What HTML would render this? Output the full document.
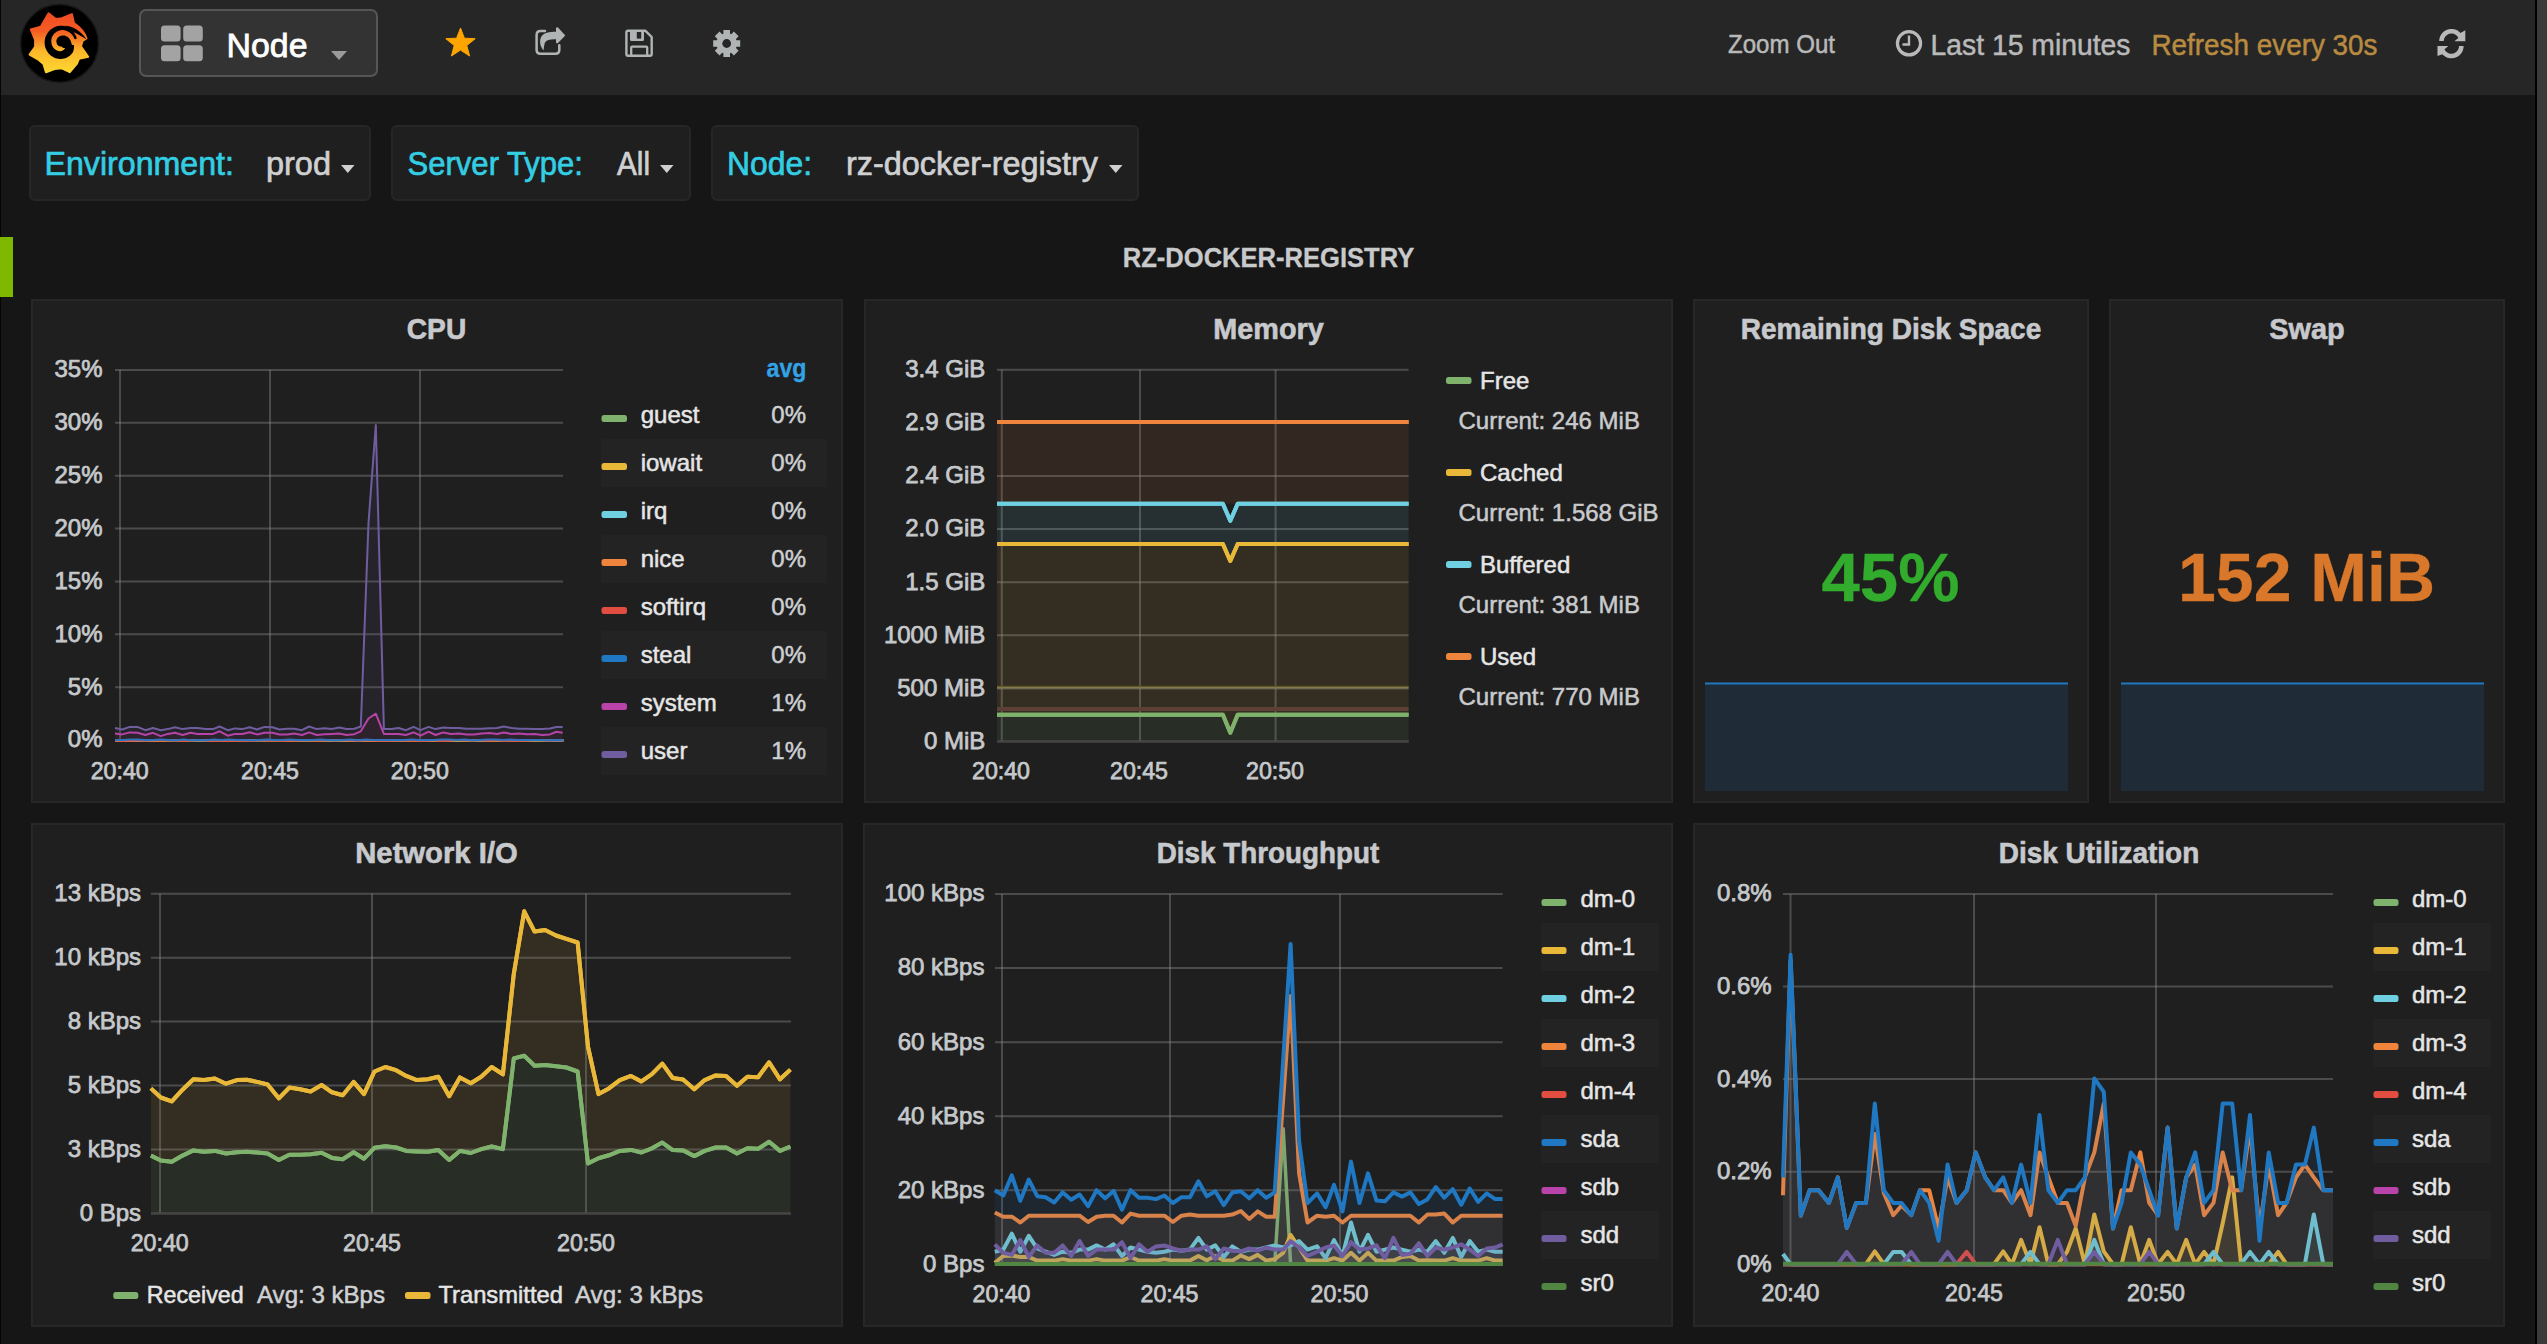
<!DOCTYPE html><html><head><meta charset="utf-8"><title>Grafana - Node</title>
<style>
html,body{margin:0;padding:0;}
body{width:2547px;height:1344px;overflow:hidden;background:#161616;position:relative;font-family:"Liberation Sans", sans-serif;}
.panel{position:absolute;box-sizing:border-box;background:#1f1f1f;border:2px solid #272727;}
.abs{position:absolute;}
.var{position:absolute;box-sizing:border-box;background:#1f1f1f;border:2px solid #262626;border-radius:6px;}
</style></head><body>

<div class="abs" style="left:0;top:0;width:1px;height:1344px;background:#050505"></div>
<div class="abs" style="left:2535px;top:0;width:2px;height:1344px;background:#000"></div>
<div class="abs" style="left:2537px;top:0;width:10px;height:1344px;background:#3a3a3a"></div>
<div class="abs" style="left:1px;top:0;width:2534px;height:95px;background:#262626"></div>
<div class="abs" style="left:139px;top:9px;width:239px;height:68px;box-sizing:border-box;background:#333;border:2px solid #565656;border-radius:7px"></div>
<svg style="position:absolute;left:0px;top:0px" width="2535" height="95" viewBox="0 0 2535 95" font-family='"Liberation Sans", sans-serif'><g transform="translate(15,0) scale(0.066979)"><defs><linearGradient id="lg" gradientUnits="userSpaceOnUse" x1="0" y1="200" x2="0" y2="1090">
<stop offset="0" stop-color="#f04a26"/><stop offset="0.3" stop-color="#f55d22"/><stop offset="0.62" stop-color="#fbb62a"/><stop offset="1" stop-color="#fdd831"/></linearGradient></defs>
<circle cx="665" cy="648" r="580" fill="#000" stroke="#161616" stroke-width="22"/>
<path fill="url(#lg)" stroke="url(#lg)" stroke-width="30" stroke-linejoin="round" d="M500,200 L610,285 L700,272 L850,210 L880,345 C960,400 1040,480 1068,575 L1010,610 L985,690 L1092,848 L955,878 L925,950 L818,1078 L700,1020 L590,1030 L462,1078 L425,955 L355,895 L218,815 L300,700 L300,595 L236,440 L385,400 L430,320 Z"/>
<circle cx="690" cy="640" r="170" fill="#000"/>
<path fill="#000" d="M922,578 L917,558 L910,538 L901,518 L890,500 L878,482 L865,465 L849,450 L833,436 L815,423 L796,412 L776,403 L756,395 L734,389 L712,385 L690,383 L668,384 L646,388 L624,393 L603,400 L582,409 L563,420 L545,432 L527,446 L511,461 L497,478 L484,496 L473,514 L463,534 L455,554 L449,575 L445,597 L442,618 L442,640 L443,662 L446,683 L451,704 L458,724 L467,744 L477,763 L489,781 L502,798 L517,813 L533,827 L550,840 L568,851 L587,861 L607,869 L627,875 L648,879 L669,881 L690,882 L711,879 L731,875 L751,869 L770,861 L789,852 L806,841 L822,828 L837,815 L850,800 L862,785 L870,766 L875,747 L879,728 L881,709 L881,691 L879,673 L690,640 Z"/>
<path fill="#000" d="M740,384 C870,385 990,470 1070,588 C1000,545 930,500 860,470 Z"/>
<path fill="url(#lg)" d="M902,677 L902,660 L900,644 L899,627 L896,611 L893,595 L888,580 L881,565 L874,550 L866,537 L856,524 L846,511 L835,500 L823,490 L810,481 L797,473 L783,466 L768,460 L754,455 L739,451 L724,449 L709,448 L693,448 L678,450 L664,454 L650,459 L636,465 L624,472 L612,480 L601,488 L590,498 L581,508 L573,518 L565,530 L559,541 L553,553 L549,565 L546,577 L544,590 L542,602 L542,614 L543,626 L544,637 L546,649 L548,660 L551,671 L555,681 L560,691 L565,701 L571,710 L578,718 L586,726 L593,733 L602,740 L611,745 L620,750 L629,755 L639,758 L648,761 L658,763 L668,764 L678,764 L688,763 L697,760 L706,757 L715,752 L723,747 L730,741 L736,735 L742,729 L747,722 L744,718 L735,717 L727,715 L719,713 L711,710 L705,706 L699,701 L693,696 L689,692 L685,693 L681,693 L676,693 L672,692 L668,692 L663,690 L659,689 L655,687 L651,684 L647,682 L643,679 L639,675 L636,672 L633,668 L630,664 L628,659 L626,654 L624,649 L623,644 L622,639 L620,633 L619,627 L618,621 L618,615 L618,609 L619,602 L620,596 L623,589 L625,583 L629,576 L632,570 L637,564 L642,559 L648,553 L654,548 L661,544 L668,540 L675,537 L684,534 L692,532 L701,530 L710,529 L719,529 L728,530 L737,531 L747,533 L756,536 L765,540 L774,545 L783,550 L792,556 L799,563 L807,571 L814,580 L820,589 L826,598 L831,609 L835,620 L838,631 L841,643 L845,655 L848,668 Z"/>
</g><rect x="161" y="25.6" width="19.6" height="16" rx="3.5" fill="#a3a3a3"/><rect x="183.2" y="25.6" width="19.6" height="16" rx="3.5" fill="#a3a3a3"/><rect x="161" y="45.2" width="19.6" height="16" rx="3.5" fill="#a3a3a3"/><rect x="183.2" y="45.2" width="19.6" height="16" rx="3.5" fill="#a3a3a3"/><text x="226.5" y="57" font-size="33.5" fill="#ffffff" text-anchor="start" textLength="81" lengthAdjust="spacingAndGlyphs" stroke="#ffffff" stroke-width="0.8">Node</text><path d="M331,51 L347,51 L339,60 Z" fill="#9a9a9a"/><path d="M460.5,28.0 L464.4,38.2 L475.2,38.7 L466.8,45.5 L469.6,56.0 L460.5,50.1 L451.4,56.0 L454.2,45.5 L445.8,38.7 L456.6,38.2 Z" fill="#ffa500" stroke="#ffa500" stroke-width="1" stroke-linejoin="round"/><path d="M545,31 L540.5,31 Q536.6,31 536.6,35 L536.6,50 Q536.6,53.7 540.5,53.7 L555.5,53.7 Q559.3,53.7 559.3,50 L559.3,45.3" fill="none" stroke="#b1b4b4" stroke-width="2.5" stroke-linecap="round"/><path d="M543.5,50.5 C539,45 539,38 543,34.8 C545,32.8 549,31.8 556,31.8 L556,28 Q556.8,26.6 558,27.6 L565.3,35.5 L558,43 Q556.8,44 556,42.6 L556,39.2 C550,39 546.5,40 545,42.5 C544,45 544,48 543.5,50.5 Z" fill="#b1b4b4"/><path d="M628,30.8 L645.5,30.8 L651.7,37 L651.7,54 Q651.7,55.8 650,55.8 L628,55.8 Q626.4,55.8 626.4,54 L626.4,32.5 Q626.4,30.8 628,30.8 Z" fill="none" stroke="#b1b4b4" stroke-width="2.4" stroke-linejoin="round"/><path d="M630,31 L644,31 L644,39.5 Q644,41 642.5,41 L631.5,41 Q630,41 630,39.5 Z" fill="#b1b4b4"/><rect x="636.8" y="32" width="4.4" height="6.6" fill="#262626"/><path d="M631.2,55 L631.2,47.5 Q631.2,46.6 632.2,46.6 L646.3,46.6 Q647.2,46.6 647.2,47.5 L647.2,55" fill="none" stroke="#b1b4b4" stroke-width="2.3"/><path d="M723.4,33.8 L723.4,30.0 L730.0,30.0 L730.0,33.8 L731.2,34.2 L733.9,31.6 L738.6,36.3 L736.0,39.0 L736.4,40.2 L740.2,40.2 L740.2,46.8 L736.4,46.8 L736.0,48.0 L738.6,50.7 L733.9,55.4 L731.2,52.8 L730.0,53.2 L730.0,57.0 L723.4,57.0 L723.4,53.2 L722.2,52.8 L719.5,55.4 L714.8,50.7 L717.4,48.0 L717.0,46.8 L713.2,46.8 L713.2,40.2 L717.0,40.2 L717.4,39.0 L714.8,36.3 L719.5,31.6 L722.2,34.2 Z" fill="#b1b4b4"/><circle cx="726.7" cy="43.5" r="4.4" fill="#262626"/><text x="1728" y="53" font-size="26" fill="#b9b9b9" text-anchor="start" textLength="107" lengthAdjust="spacingAndGlyphs" stroke="#b9b9b9" stroke-width="0.5">Zoom Out</text><circle cx="1909" cy="43.3" r="11.6" fill="none" stroke="#b9b9b9" stroke-width="3.2"/><path d="M1909,35.5 L1909,44.5 L1902.5,44.5" fill="none" stroke="#b9b9b9" stroke-width="2.4"/><text x="1930.5" y="55.3" font-size="29.5" fill="#b9b9b9" text-anchor="start" textLength="200" lengthAdjust="spacingAndGlyphs" stroke="#b9b9b9" stroke-width="0.5">Last 15 minutes</text><text x="2151.5" y="55.3" font-size="29.5" fill="#b88b40" text-anchor="start" textLength="226" lengthAdjust="spacingAndGlyphs" stroke="#b88b40" stroke-width="0.5">Refresh every 30s</text><path d="M2439.20,41.10 L2439.34,39.27 L2439.75,37.48 L2440.42,35.78 L2441.35,34.19 L2442.50,32.76 L2443.85,31.52 L2445.37,30.49 L2447.03,29.71 L2448.79,29.18 L2450.60,28.93 L2452.44,28.94 L2454.25,29.24 L2455.99,29.80 L2457.64,30.62 L2459.14,31.67 L2460.47,32.94 L2465.30,30.30 L2465.30,41.20 L2454.40,41.20 L2458.29,37.89 L2457.65,36.77 L2456.83,35.78 L2455.86,34.95 L2454.76,34.28 L2453.57,33.82 L2452.31,33.55 L2451.03,33.51 L2449.76,33.68 L2448.53,34.06 L2447.39,34.65 L2446.36,35.41 L2445.47,36.34 L2444.76,37.41 L2444.23,38.58 L2443.91,39.82 L2443.80,41.10 Z" fill="#b9b9b9"/><path d="M2463.60,46.10 L2463.46,47.93 L2463.05,49.72 L2462.38,51.42 L2461.45,53.01 L2460.30,54.44 L2458.95,55.68 L2457.43,56.71 L2455.77,57.49 L2454.01,58.02 L2452.20,58.27 L2450.36,58.26 L2448.55,57.96 L2446.81,57.40 L2445.16,56.58 L2443.66,55.53 L2442.33,54.26 L2437.50,56.10 L2437.50,46.00 L2448.40,46.00 L2444.51,49.31 L2445.15,50.43 L2445.97,51.42 L2446.94,52.25 L2448.04,52.92 L2449.23,53.38 L2450.49,53.65 L2451.77,53.69 L2453.04,53.52 L2454.27,53.14 L2455.41,52.55 L2456.44,51.79 L2457.33,50.86 L2458.04,49.79 L2458.57,48.62 L2458.89,47.38 L2459.00,46.10 Z" fill="#b9b9b9"/></svg>
<div class="var" style="left:29px;top:125px;width:342px;height:76px"></div>
<div class="var" style="left:391px;top:125px;width:300px;height:76px"></div>
<div class="var" style="left:711px;top:125px;width:428px;height:76px"></div>
<svg style="position:absolute;left:0px;top:95px" width="1200" height="140" viewBox="0 95 1200 140" font-family='"Liberation Sans", sans-serif'><text x="44.5" y="175" font-size="33.5" fill="#33cee3" text-anchor="start" textLength="189.5" lengthAdjust="spacingAndGlyphs" stroke="#33cee3" stroke-width="0.7">Environment:</text><text x="266" y="175" font-size="33.5" fill="#cfd0d2" text-anchor="start" textLength="65" lengthAdjust="spacingAndGlyphs" stroke="#cfd0d2" stroke-width="0.7">prod</text><path d="M341,165 L354.5,165 L347.75,173 Z" fill="#d0d0d0"/><text x="407.5" y="175" font-size="33.5" fill="#33cee3" text-anchor="start" textLength="175.5" lengthAdjust="spacingAndGlyphs" stroke="#33cee3" stroke-width="0.7">Server Type:</text><text x="617" y="175" font-size="33.5" fill="#cfd0d2" text-anchor="start" textLength="33" lengthAdjust="spacingAndGlyphs" stroke="#cfd0d2" stroke-width="0.7">All</text><path d="M660,165 L673.5,165 L666.75,173 Z" fill="#d0d0d0"/><text x="727" y="175" font-size="33.5" fill="#33cee3" text-anchor="start" textLength="85" lengthAdjust="spacingAndGlyphs" stroke="#33cee3" stroke-width="0.7">Node:</text><text x="846" y="175" font-size="33.5" fill="#cfd0d2" text-anchor="start" textLength="252" lengthAdjust="spacingAndGlyphs" stroke="#cfd0d2" stroke-width="0.7">rz-docker-registry</text><path d="M1109,165 L1122.5,165 L1115.75,173 Z" fill="#d0d0d0"/></svg>
<div class="abs" style="left:0;top:237px;width:13px;height:60px;background:#7eb900"></div>
<svg style="position:absolute;left:1000px;top:230px" width="500" height="60" viewBox="1000 230 500 60" font-family='"Liberation Sans", sans-serif'><text x="1268.5" y="267" font-size="27.5" fill="#c8c9cb" text-anchor="middle" font-weight="bold" textLength="291.5" lengthAdjust="spacingAndGlyphs" stroke="#c8c9cb" stroke-width="0.3">RZ-DOCKER-REGISTRY</text></svg>
<div class="panel" style="left:31px;top:299px;width:812px;height:504px"></div>
<div class="panel" style="left:864px;top:299px;width:809px;height:504px"></div>
<div class="panel" style="left:1693px;top:299px;width:396px;height:504px"></div>
<div class="panel" style="left:2109px;top:299px;width:396px;height:504px"></div>
<div class="panel" style="left:31px;top:823px;width:812px;height:504px"></div>
<div class="panel" style="left:863px;top:823px;width:810px;height:504px"></div>
<div class="panel" style="left:1693px;top:823px;width:812px;height:504px"></div>
<svg style="position:absolute;left:31px;top:299px" width="812" height="504" viewBox="31 299 812 504" font-family='"Liberation Sans", sans-serif'><text x="436.5" y="339" font-size="29.5" fill="#c7c9cc" text-anchor="middle" font-weight="bold" textLength="59.5" lengthAdjust="spacingAndGlyphs" stroke="#c7c9cc" stroke-width="0.6">CPU</text><line x1="115" y1="370.0" x2="563" y2="370.0" stroke="rgba(145,145,145,0.39)" stroke-width="2"/><line x1="115" y1="422.85714285714283" x2="563" y2="422.85714285714283" stroke="rgba(145,145,145,0.39)" stroke-width="2"/><line x1="115" y1="475.7142857142857" x2="563" y2="475.7142857142857" stroke="rgba(145,145,145,0.39)" stroke-width="2"/><line x1="115" y1="528.5714285714286" x2="563" y2="528.5714285714286" stroke="rgba(145,145,145,0.39)" stroke-width="2"/><line x1="115" y1="581.4285714285714" x2="563" y2="581.4285714285714" stroke="rgba(145,145,145,0.39)" stroke-width="2"/><line x1="115" y1="634.2857142857142" x2="563" y2="634.2857142857142" stroke="rgba(145,145,145,0.39)" stroke-width="2"/><line x1="115" y1="687.1428571428571" x2="563" y2="687.1428571428571" stroke="rgba(145,145,145,0.39)" stroke-width="2"/><line x1="115" y1="740.0" x2="563" y2="740.0" stroke="rgba(145,145,145,0.39)" stroke-width="2"/><line x1="120" y1="370" x2="120" y2="740" stroke="rgba(145,145,145,0.39)" stroke-width="2"/><line x1="270" y1="370" x2="270" y2="740" stroke="rgba(145,145,145,0.39)" stroke-width="2"/><line x1="420" y1="370" x2="420" y2="740" stroke="rgba(145,145,145,0.39)" stroke-width="2"/><text x="102.5" y="377.4" font-size="24" fill="#c6c9cc" text-anchor="end" stroke="#c6c9cc" stroke-width="0.75">35%</text><text x="102.5" y="430.2571428571428" font-size="24" fill="#c6c9cc" text-anchor="end" stroke="#c6c9cc" stroke-width="0.75">30%</text><text x="102.5" y="483.1142857142857" font-size="24" fill="#c6c9cc" text-anchor="end" stroke="#c6c9cc" stroke-width="0.75">25%</text><text x="102.5" y="535.9714285714285" font-size="24" fill="#c6c9cc" text-anchor="end" stroke="#c6c9cc" stroke-width="0.75">20%</text><text x="102.5" y="588.8285714285714" font-size="24" fill="#c6c9cc" text-anchor="end" stroke="#c6c9cc" stroke-width="0.75">15%</text><text x="102.5" y="641.6857142857142" font-size="24" fill="#c6c9cc" text-anchor="end" stroke="#c6c9cc" stroke-width="0.75">10%</text><text x="102.5" y="694.5428571428571" font-size="24" fill="#c6c9cc" text-anchor="end" stroke="#c6c9cc" stroke-width="0.75">5%</text><text x="102.5" y="747.4" font-size="24" fill="#c6c9cc" text-anchor="end" stroke="#c6c9cc" stroke-width="0.75">0%</text><text x="119.7" y="778.6" font-size="24" fill="#c6c9cc" text-anchor="middle" textLength="58" lengthAdjust="spacingAndGlyphs" stroke="#c6c9cc" stroke-width="0.75">20:40</text><text x="270" y="778.6" font-size="24" fill="#c6c9cc" text-anchor="middle" textLength="58" lengthAdjust="spacingAndGlyphs" stroke="#c6c9cc" stroke-width="0.75">20:45</text><text x="419.8" y="778.6" font-size="24" fill="#c6c9cc" text-anchor="middle" textLength="58" lengthAdjust="spacingAndGlyphs" stroke="#c6c9cc" stroke-width="0.75">20:50</text><path d="M115.0,740.5 L122.6,740.5 L130.2,740.8 L137.8,740.8 L145.4,740.1 L153.0,740.8 L160.6,740.8 L168.2,740.1 L175.8,740.1 L183.4,740.5 L191.0,740.5 L198.6,740.5 L206.2,740.5 L213.8,740.1 L221.4,740.8 L229.0,740.1 L236.6,740.8 L244.2,740.1 L251.8,740.5 L259.4,740.5 L267.0,740.8 L274.6,740.5 L282.2,740.1 L289.8,740.5 L297.4,740.8 L305.0,740.8 L312.6,740.5 L320.2,740.5 L327.8,740.1 L335.4,740.1 L343.0,740.1 L350.6,740.8 L358.2,740.8 L365.8,740.5 L373.4,740.5 L381.0,740.1 L388.6,740.8 L396.2,740.5 L403.8,740.5 L411.4,740.1 L419.0,740.8 L426.6,740.1 L434.2,740.8 L441.8,740.1 L449.4,740.5 L457.0,740.8 L464.6,740.1 L472.2,740.5 L479.8,740.5 L487.4,740.8 L495.0,740.5 L502.6,740.5 L510.2,740.1 L517.8,740.5 L525.4,740.5 L533.0,740.8 L540.6,740.8 L548.2,740.8 L555.8,740.5 L563.4,740.5 L563.4,740.5 L115.0,740.5 Z" fill="#7EB26D" fill-opacity="0.1" stroke="none"/><path d="M115.0,740.5 L122.6,740.5 L130.2,740.8 L137.8,740.8 L145.4,740.1 L153.0,740.8 L160.6,740.8 L168.2,740.1 L175.8,740.1 L183.4,740.5 L191.0,740.5 L198.6,740.5 L206.2,740.5 L213.8,740.1 L221.4,740.8 L229.0,740.1 L236.6,740.8 L244.2,740.1 L251.8,740.5 L259.4,740.5 L267.0,740.8 L274.6,740.5 L282.2,740.1 L289.8,740.5 L297.4,740.8 L305.0,740.8 L312.6,740.5 L320.2,740.5 L327.8,740.1 L335.4,740.1 L343.0,740.1 L350.6,740.8 L358.2,740.8 L365.8,740.5 L373.4,740.5 L381.0,740.1 L388.6,740.8 L396.2,740.5 L403.8,740.5 L411.4,740.1 L419.0,740.8 L426.6,740.1 L434.2,740.8 L441.8,740.1 L449.4,740.5 L457.0,740.8 L464.6,740.1 L472.2,740.5 L479.8,740.5 L487.4,740.8 L495.0,740.5 L502.6,740.5 L510.2,740.1 L517.8,740.5 L525.4,740.5 L533.0,740.8 L540.6,740.8 L548.2,740.8 L555.8,740.5 L563.4,740.5" fill="none" stroke="#7EB26D" stroke-width="2" stroke-linejoin="round" stroke-linecap="butt"/><path d="M115.0,740.8 L122.6,740.8 L130.2,740.1 L137.8,740.5 L145.4,740.8 L153.0,740.1 L160.6,740.8 L168.2,740.1 L175.8,740.8 L183.4,740.5 L191.0,740.5 L198.6,740.5 L206.2,740.5 L213.8,740.5 L221.4,740.5 L229.0,740.5 L236.6,740.5 L244.2,740.8 L251.8,740.5 L259.4,740.1 L267.0,740.1 L274.6,740.5 L282.2,740.5 L289.8,740.8 L297.4,740.1 L305.0,740.1 L312.6,740.5 L320.2,740.5 L327.8,740.8 L335.4,740.8 L343.0,740.8 L350.6,740.8 L358.2,740.8 L365.8,740.5 L373.4,740.8 L381.0,740.8 L388.6,740.5 L396.2,740.5 L403.8,740.5 L411.4,740.5 L419.0,740.8 L426.6,740.5 L434.2,740.5 L441.8,740.1 L449.4,740.5 L457.0,740.5 L464.6,740.5 L472.2,740.5 L479.8,740.5 L487.4,740.1 L495.0,740.5 L502.6,740.5 L510.2,740.5 L517.8,740.8 L525.4,740.5 L533.0,740.1 L540.6,740.1 L548.2,740.1 L555.8,740.8 L563.4,740.5 L563.4,740.5 L115.0,740.5 Z" fill="#EAB839" fill-opacity="0.1" stroke="none"/><path d="M115.0,740.8 L122.6,740.8 L130.2,740.1 L137.8,740.5 L145.4,740.8 L153.0,740.1 L160.6,740.8 L168.2,740.1 L175.8,740.8 L183.4,740.5 L191.0,740.5 L198.6,740.5 L206.2,740.5 L213.8,740.5 L221.4,740.5 L229.0,740.5 L236.6,740.5 L244.2,740.8 L251.8,740.5 L259.4,740.1 L267.0,740.1 L274.6,740.5 L282.2,740.5 L289.8,740.8 L297.4,740.1 L305.0,740.1 L312.6,740.5 L320.2,740.5 L327.8,740.8 L335.4,740.8 L343.0,740.8 L350.6,740.8 L358.2,740.8 L365.8,740.5 L373.4,740.8 L381.0,740.8 L388.6,740.5 L396.2,740.5 L403.8,740.5 L411.4,740.5 L419.0,740.8 L426.6,740.5 L434.2,740.5 L441.8,740.1 L449.4,740.5 L457.0,740.5 L464.6,740.5 L472.2,740.5 L479.8,740.5 L487.4,740.1 L495.0,740.5 L502.6,740.5 L510.2,740.5 L517.8,740.8 L525.4,740.5 L533.0,740.1 L540.6,740.1 L548.2,740.1 L555.8,740.8 L563.4,740.5" fill="none" stroke="#EAB839" stroke-width="2" stroke-linejoin="round" stroke-linecap="butt"/><path d="M115.0,740.3 L122.6,740.6 L130.2,740.6 L137.8,740.6 L145.4,740.6 L153.0,739.9 L160.6,740.3 L168.2,740.3 L175.8,740.3 L183.4,739.9 L191.0,739.9 L198.6,740.6 L206.2,740.3 L213.8,740.3 L221.4,740.3 L229.0,739.9 L236.6,740.3 L244.2,740.3 L251.8,739.9 L259.4,740.3 L267.0,739.9 L274.6,739.9 L282.2,740.3 L289.8,739.9 L297.4,740.3 L305.0,739.9 L312.6,740.3 L320.2,740.3 L327.8,740.3 L335.4,740.6 L343.0,740.3 L350.6,740.3 L358.2,740.6 L365.8,739.9 L373.4,740.3 L381.0,740.3 L388.6,739.9 L396.2,740.6 L403.8,739.9 L411.4,740.3 L419.0,739.9 L426.6,740.6 L434.2,739.9 L441.8,739.9 L449.4,740.3 L457.0,740.3 L464.6,740.3 L472.2,740.3 L479.8,740.6 L487.4,740.3 L495.0,739.9 L502.6,740.3 L510.2,740.6 L517.8,740.3 L525.4,740.6 L533.0,739.9 L540.6,740.3 L548.2,740.3 L555.8,740.6 L563.4,740.3 L563.4,740.5 L115.0,740.5 Z" fill="#6ED0E0" fill-opacity="0.1" stroke="none"/><path d="M115.0,740.3 L122.6,740.6 L130.2,740.6 L137.8,740.6 L145.4,740.6 L153.0,739.9 L160.6,740.3 L168.2,740.3 L175.8,740.3 L183.4,739.9 L191.0,739.9 L198.6,740.6 L206.2,740.3 L213.8,740.3 L221.4,740.3 L229.0,739.9 L236.6,740.3 L244.2,740.3 L251.8,739.9 L259.4,740.3 L267.0,739.9 L274.6,739.9 L282.2,740.3 L289.8,739.9 L297.4,740.3 L305.0,739.9 L312.6,740.3 L320.2,740.3 L327.8,740.3 L335.4,740.6 L343.0,740.3 L350.6,740.3 L358.2,740.6 L365.8,739.9 L373.4,740.3 L381.0,740.3 L388.6,739.9 L396.2,740.6 L403.8,739.9 L411.4,740.3 L419.0,739.9 L426.6,740.6 L434.2,739.9 L441.8,739.9 L449.4,740.3 L457.0,740.3 L464.6,740.3 L472.2,740.3 L479.8,740.6 L487.4,740.3 L495.0,739.9 L502.6,740.3 L510.2,740.6 L517.8,740.3 L525.4,740.6 L533.0,739.9 L540.6,740.3 L548.2,740.3 L555.8,740.6 L563.4,740.3" fill="none" stroke="#6ED0E0" stroke-width="2" stroke-linejoin="round" stroke-linecap="butt"/><path d="M115.0,740.8 L122.6,740.5 L130.2,740.8 L137.8,740.1 L145.4,740.5 L153.0,740.8 L160.6,740.8 L168.2,740.8 L175.8,740.5 L183.4,740.5 L191.0,740.5 L198.6,740.5 L206.2,740.5 L213.8,740.5 L221.4,740.8 L229.0,740.5 L236.6,740.8 L244.2,740.1 L251.8,740.5 L259.4,740.5 L267.0,740.5 L274.6,740.5 L282.2,740.5 L289.8,740.5 L297.4,740.8 L305.0,740.5 L312.6,740.5 L320.2,740.5 L327.8,740.1 L335.4,740.5 L343.0,740.1 L350.6,740.5 L358.2,740.1 L365.8,740.1 L373.4,740.8 L381.0,740.5 L388.6,740.5 L396.2,740.1 L403.8,740.8 L411.4,740.8 L419.0,740.5 L426.6,740.5 L434.2,740.5 L441.8,740.8 L449.4,740.5 L457.0,740.5 L464.6,740.5 L472.2,740.5 L479.8,740.5 L487.4,740.8 L495.0,740.5 L502.6,740.5 L510.2,740.1 L517.8,740.8 L525.4,740.5 L533.0,740.5 L540.6,740.5 L548.2,740.5 L555.8,740.1 L563.4,740.5 L563.4,740.5 L115.0,740.5 Z" fill="#EF843C" fill-opacity="0.1" stroke="none"/><path d="M115.0,740.8 L122.6,740.5 L130.2,740.8 L137.8,740.1 L145.4,740.5 L153.0,740.8 L160.6,740.8 L168.2,740.8 L175.8,740.5 L183.4,740.5 L191.0,740.5 L198.6,740.5 L206.2,740.5 L213.8,740.5 L221.4,740.8 L229.0,740.5 L236.6,740.8 L244.2,740.1 L251.8,740.5 L259.4,740.5 L267.0,740.5 L274.6,740.5 L282.2,740.5 L289.8,740.5 L297.4,740.8 L305.0,740.5 L312.6,740.5 L320.2,740.5 L327.8,740.1 L335.4,740.5 L343.0,740.1 L350.6,740.5 L358.2,740.1 L365.8,740.1 L373.4,740.8 L381.0,740.5 L388.6,740.5 L396.2,740.1 L403.8,740.8 L411.4,740.8 L419.0,740.5 L426.6,740.5 L434.2,740.5 L441.8,740.8 L449.4,740.5 L457.0,740.5 L464.6,740.5 L472.2,740.5 L479.8,740.5 L487.4,740.8 L495.0,740.5 L502.6,740.5 L510.2,740.1 L517.8,740.8 L525.4,740.5 L533.0,740.5 L540.6,740.5 L548.2,740.5 L555.8,740.1 L563.4,740.5" fill="none" stroke="#EF843C" stroke-width="2" stroke-linejoin="round" stroke-linecap="butt"/><path d="M115.0,740.5 L122.6,740.8 L130.2,740.5 L137.8,740.5 L145.4,740.8 L153.0,740.1 L160.6,740.5 L168.2,740.1 L175.8,740.8 L183.4,740.8 L191.0,740.5 L198.6,740.1 L206.2,740.5 L213.8,740.8 L221.4,740.5 L229.0,740.8 L236.6,740.5 L244.2,740.8 L251.8,740.8 L259.4,740.1 L267.0,740.5 L274.6,740.5 L282.2,740.8 L289.8,740.5 L297.4,740.5 L305.0,740.1 L312.6,740.5 L320.2,740.5 L327.8,740.1 L335.4,740.5 L343.0,740.1 L350.6,740.5 L358.2,740.8 L365.8,740.5 L373.4,740.5 L381.0,740.8 L388.6,740.8 L396.2,740.5 L403.8,740.5 L411.4,740.5 L419.0,740.8 L426.6,740.8 L434.2,740.1 L441.8,740.8 L449.4,740.5 L457.0,740.1 L464.6,740.1 L472.2,740.5 L479.8,740.1 L487.4,740.5 L495.0,740.1 L502.6,740.8 L510.2,740.8 L517.8,740.5 L525.4,740.8 L533.0,740.1 L540.6,740.1 L548.2,740.5 L555.8,740.5 L563.4,740.5 L563.4,740.5 L115.0,740.5 Z" fill="#E24D42" fill-opacity="0.1" stroke="none"/><path d="M115.0,740.5 L122.6,740.8 L130.2,740.5 L137.8,740.5 L145.4,740.8 L153.0,740.1 L160.6,740.5 L168.2,740.1 L175.8,740.8 L183.4,740.8 L191.0,740.5 L198.6,740.1 L206.2,740.5 L213.8,740.8 L221.4,740.5 L229.0,740.8 L236.6,740.5 L244.2,740.8 L251.8,740.8 L259.4,740.1 L267.0,740.5 L274.6,740.5 L282.2,740.8 L289.8,740.5 L297.4,740.5 L305.0,740.1 L312.6,740.5 L320.2,740.5 L327.8,740.1 L335.4,740.5 L343.0,740.1 L350.6,740.5 L358.2,740.8 L365.8,740.5 L373.4,740.5 L381.0,740.8 L388.6,740.8 L396.2,740.5 L403.8,740.5 L411.4,740.5 L419.0,740.8 L426.6,740.8 L434.2,740.1 L441.8,740.8 L449.4,740.5 L457.0,740.1 L464.6,740.1 L472.2,740.5 L479.8,740.1 L487.4,740.5 L495.0,740.1 L502.6,740.8 L510.2,740.8 L517.8,740.5 L525.4,740.8 L533.0,740.1 L540.6,740.1 L548.2,740.5 L555.8,740.5 L563.4,740.5" fill="none" stroke="#E24D42" stroke-width="2" stroke-linejoin="round" stroke-linecap="butt"/><path d="M115.0,740.0 L122.6,740.0 L130.2,739.6 L137.8,739.6 L145.4,740.0 L153.0,740.0 L160.6,739.6 L168.2,740.0 L175.8,740.3 L183.4,739.6 L191.0,740.3 L198.6,740.0 L206.2,740.3 L213.8,739.6 L221.4,740.0 L229.0,739.6 L236.6,740.0 L244.2,740.0 L251.8,740.3 L259.4,740.0 L267.0,739.6 L274.6,740.0 L282.2,740.0 L289.8,739.6 L297.4,740.0 L305.0,740.0 L312.6,740.0 L320.2,739.6 L327.8,740.0 L335.4,740.3 L343.0,740.0 L350.6,739.6 L358.2,740.3 L365.8,739.6 L373.4,740.0 L381.0,740.0 L388.6,740.0 L396.2,740.0 L403.8,740.0 L411.4,739.6 L419.0,740.0 L426.6,740.0 L434.2,740.0 L441.8,739.6 L449.4,739.6 L457.0,740.0 L464.6,739.6 L472.2,740.3 L479.8,740.0 L487.4,739.6 L495.0,739.6 L502.6,740.0 L510.2,739.6 L517.8,740.0 L525.4,740.0 L533.0,740.0 L540.6,740.0 L548.2,740.3 L555.8,740.0 L563.4,740.3 L563.4,740.5 L115.0,740.5 Z" fill="#1F78C1" fill-opacity="0.1" stroke="none"/><path d="M115.0,740.0 L122.6,740.0 L130.2,739.6 L137.8,739.6 L145.4,740.0 L153.0,740.0 L160.6,739.6 L168.2,740.0 L175.8,740.3 L183.4,739.6 L191.0,740.3 L198.6,740.0 L206.2,740.3 L213.8,739.6 L221.4,740.0 L229.0,739.6 L236.6,740.0 L244.2,740.0 L251.8,740.3 L259.4,740.0 L267.0,739.6 L274.6,740.0 L282.2,740.0 L289.8,739.6 L297.4,740.0 L305.0,740.0 L312.6,740.0 L320.2,739.6 L327.8,740.0 L335.4,740.3 L343.0,740.0 L350.6,739.6 L358.2,740.3 L365.8,739.6 L373.4,740.0 L381.0,740.0 L388.6,740.0 L396.2,740.0 L403.8,740.0 L411.4,739.6 L419.0,740.0 L426.6,740.0 L434.2,740.0 L441.8,739.6 L449.4,739.6 L457.0,740.0 L464.6,739.6 L472.2,740.3 L479.8,740.0 L487.4,739.6 L495.0,739.6 L502.6,740.0 L510.2,739.6 L517.8,740.0 L525.4,740.0 L533.0,740.0 L540.6,740.0 L548.2,740.3 L555.8,740.0 L563.4,740.3" fill="none" stroke="#1F78C1" stroke-width="2" stroke-linejoin="round" stroke-linecap="butt"/><path d="M115.0,733.5 L122.2,734.4 L129.9,732.4 L137.6,732.8 L145.3,735.0 L153.0,732.8 L160.7,736.1 L167.8,733.9 L175.0,732.8 L182.7,735.0 L190.4,732.8 L197.7,733.9 L205.4,733.9 L213.1,733.9 L219.6,731.3 L227.8,735.7 L235.0,733.9 L242.1,733.9 L249.8,732.2 L257.0,734.4 L264.5,732.8 L272.4,732.8 L279.5,734.4 L287.2,734.6 L294.4,733.5 L301.9,735.0 L309.1,732.4 L316.8,735.0 L324.5,734.2 L331.8,733.9 L339.3,733.5 L346.5,735.0 L354.2,734.2 L360.8,731.3 L368.5,718.5 L375.8,713.7 L383.9,733.9 L391.6,733.9 L398.6,733.9 L405.9,735.0 L413.6,732.4 L420.6,735.7 L428.5,731.7 L435.6,735.0 L443.3,732.4 L451.0,733.9 L458.7,733.5 L466.4,734.6 L474.0,734.6 L481.7,733.5 L489.4,733.1 L497.1,733.9 L503.7,732.4 L511.4,733.9 L519.1,733.5 L526.8,734.2 L534.5,733.9 L542.2,735.0 L549.9,734.4 L556.5,731.7 L562.7,732.8 L562.7,740.5 L115.0,740.5 Z" fill="#BA43A9" fill-opacity="0.1" stroke="none"/><path d="M115.0,733.5 L122.2,734.4 L129.9,732.4 L137.6,732.8 L145.3,735.0 L153.0,732.8 L160.7,736.1 L167.8,733.9 L175.0,732.8 L182.7,735.0 L190.4,732.8 L197.7,733.9 L205.4,733.9 L213.1,733.9 L219.6,731.3 L227.8,735.7 L235.0,733.9 L242.1,733.9 L249.8,732.2 L257.0,734.4 L264.5,732.8 L272.4,732.8 L279.5,734.4 L287.2,734.6 L294.4,733.5 L301.9,735.0 L309.1,732.4 L316.8,735.0 L324.5,734.2 L331.8,733.9 L339.3,733.5 L346.5,735.0 L354.2,734.2 L360.8,731.3 L368.5,718.5 L375.8,713.7 L383.9,733.9 L391.6,733.9 L398.6,733.9 L405.9,735.0 L413.6,732.4 L420.6,735.7 L428.5,731.7 L435.6,735.0 L443.3,732.4 L451.0,733.9 L458.7,733.5 L466.4,734.6 L474.0,734.6 L481.7,733.5 L489.4,733.1 L497.1,733.9 L503.7,732.4 L511.4,733.9 L519.1,733.5 L526.8,734.2 L534.5,733.9 L542.2,735.0 L549.9,734.4 L556.5,731.7 L562.7,732.8" fill="none" stroke="#BA43A9" stroke-width="2" stroke-linejoin="round" stroke-linecap="butt"/><path d="M115.0,728.0 L122.2,729.5 L129.9,726.9 L137.6,726.9 L145.3,730.2 L153.0,728.0 L160.7,730.2 L167.8,729.1 L175.0,727.3 L182.7,729.1 L190.4,728.0 L197.7,728.0 L205.4,729.1 L213.1,729.1 L219.6,726.5 L227.8,730.2 L235.0,728.4 L242.1,729.1 L249.8,727.3 L257.0,729.5 L264.5,726.9 L272.4,727.3 L279.5,729.5 L287.2,728.7 L294.4,728.7 L301.9,730.2 L309.1,726.5 L316.8,729.1 L324.5,728.2 L331.8,729.1 L339.3,727.6 L346.5,729.1 L354.2,728.7 L360.8,726.5 L368.5,523.1 L375.8,425.0 L383.9,729.1 L391.6,729.1 L398.6,728.0 L405.9,730.2 L413.6,726.9 L420.6,730.2 L428.5,726.9 L435.6,729.1 L443.3,727.6 L451.0,728.0 L458.7,728.0 L466.4,728.7 L474.0,728.7 L481.7,728.7 L489.4,728.2 L497.1,728.0 L503.7,726.5 L511.4,728.0 L519.1,728.7 L526.8,728.7 L534.5,729.1 L542.2,729.1 L549.9,728.4 L556.5,726.9 L562.7,726.9 L562.7,732.8 L556.5,731.7 L549.9,734.4 L542.2,735.0 L534.5,733.9 L526.8,734.2 L519.1,733.5 L511.4,733.9 L503.7,732.4 L497.1,733.9 L489.4,733.1 L481.7,733.5 L474.0,734.6 L466.4,734.6 L458.7,733.5 L451.0,733.9 L443.3,732.4 L435.6,735.0 L428.5,731.7 L420.6,735.7 L413.6,732.4 L405.9,735.0 L398.6,733.9 L391.6,733.9 L383.9,733.9 L375.8,713.7 L368.5,718.5 L360.8,731.3 L354.2,734.2 L346.5,735.0 L339.3,733.5 L331.8,733.9 L324.5,734.2 L316.8,735.0 L309.1,732.4 L301.9,735.0 L294.4,733.5 L287.2,734.6 L279.5,734.4 L272.4,732.8 L264.5,732.8 L257.0,734.4 L249.8,732.2 L242.1,733.9 L235.0,733.9 L227.8,735.7 L219.6,731.3 L213.1,733.9 L205.4,733.9 L197.7,733.9 L190.4,732.8 L182.7,735.0 L175.0,732.8 L167.8,733.9 L160.7,736.1 L153.0,732.8 L145.3,735.0 L137.6,732.8 L129.9,732.4 L122.2,734.4 L115.0,733.5 Z" fill="#705DA0" fill-opacity="0.1" stroke="none"/><path d="M115.0,728.0 L122.2,729.5 L129.9,726.9 L137.6,726.9 L145.3,730.2 L153.0,728.0 L160.7,730.2 L167.8,729.1 L175.0,727.3 L182.7,729.1 L190.4,728.0 L197.7,728.0 L205.4,729.1 L213.1,729.1 L219.6,726.5 L227.8,730.2 L235.0,728.4 L242.1,729.1 L249.8,727.3 L257.0,729.5 L264.5,726.9 L272.4,727.3 L279.5,729.5 L287.2,728.7 L294.4,728.7 L301.9,730.2 L309.1,726.5 L316.8,729.1 L324.5,728.2 L331.8,729.1 L339.3,727.6 L346.5,729.1 L354.2,728.7 L360.8,726.5 L368.5,523.1 L375.8,425.0 L383.9,729.1 L391.6,729.1 L398.6,728.0 L405.9,730.2 L413.6,726.9 L420.6,730.2 L428.5,726.9 L435.6,729.1 L443.3,727.6 L451.0,728.0 L458.7,728.0 L466.4,728.7 L474.0,728.7 L481.7,728.7 L489.4,728.2 L497.1,728.0 L503.7,726.5 L511.4,728.0 L519.1,728.7 L526.8,728.7 L534.5,729.1 L542.2,729.1 L549.9,728.4 L556.5,726.9 L562.7,726.9" fill="none" stroke="#705DA0" stroke-width="2" stroke-linejoin="round" stroke-linecap="butt"/><text x="806.5" y="377" font-size="25" fill="#33a2e5" text-anchor="end" font-weight="bold" textLength="40" lengthAdjust="spacingAndGlyphs" stroke="#33a2e5" stroke-width="0.3">avg</text><rect x="601.5" y="415" width="25.5" height="7" rx="2.5" fill="#7EB26D"/><text x="640.7" y="423" font-size="24" fill="#e6e6e6" text-anchor="start" stroke="#e6e6e6" stroke-width="0.5">guest</text><text x="806" y="423" font-size="24" fill="#cdcfd1" text-anchor="end" stroke="#cdcfd1" stroke-width="0.5">0%</text><rect x="601" y="439" width="226" height="48" fill="#232323"/><rect x="601.5" y="463" width="25.5" height="7" rx="2.5" fill="#EAB839"/><text x="640.7" y="471" font-size="24" fill="#e6e6e6" text-anchor="start" stroke="#e6e6e6" stroke-width="0.5">iowait</text><text x="806" y="471" font-size="24" fill="#cdcfd1" text-anchor="end" stroke="#cdcfd1" stroke-width="0.5">0%</text><rect x="601.5" y="511" width="25.5" height="7" rx="2.5" fill="#6ED0E0"/><text x="640.7" y="519" font-size="24" fill="#e6e6e6" text-anchor="start" stroke="#e6e6e6" stroke-width="0.5">irq</text><text x="806" y="519" font-size="24" fill="#cdcfd1" text-anchor="end" stroke="#cdcfd1" stroke-width="0.5">0%</text><rect x="601" y="535" width="226" height="48" fill="#232323"/><rect x="601.5" y="559" width="25.5" height="7" rx="2.5" fill="#EF843C"/><text x="640.7" y="567" font-size="24" fill="#e6e6e6" text-anchor="start" stroke="#e6e6e6" stroke-width="0.5">nice</text><text x="806" y="567" font-size="24" fill="#cdcfd1" text-anchor="end" stroke="#cdcfd1" stroke-width="0.5">0%</text><rect x="601.5" y="607" width="25.5" height="7" rx="2.5" fill="#E24D42"/><text x="640.7" y="615" font-size="24" fill="#e6e6e6" text-anchor="start" stroke="#e6e6e6" stroke-width="0.5">softirq</text><text x="806" y="615" font-size="24" fill="#cdcfd1" text-anchor="end" stroke="#cdcfd1" stroke-width="0.5">0%</text><rect x="601" y="631" width="226" height="48" fill="#232323"/><rect x="601.5" y="655" width="25.5" height="7" rx="2.5" fill="#1F78C1"/><text x="640.7" y="663" font-size="24" fill="#e6e6e6" text-anchor="start" stroke="#e6e6e6" stroke-width="0.5">steal</text><text x="806" y="663" font-size="24" fill="#cdcfd1" text-anchor="end" stroke="#cdcfd1" stroke-width="0.5">0%</text><rect x="601.5" y="703" width="25.5" height="7" rx="2.5" fill="#BA43A9"/><text x="640.7" y="711" font-size="24" fill="#e6e6e6" text-anchor="start" stroke="#e6e6e6" stroke-width="0.5">system</text><text x="806" y="711" font-size="24" fill="#cdcfd1" text-anchor="end" stroke="#cdcfd1" stroke-width="0.5">1%</text><rect x="601" y="727" width="226" height="48" fill="#232323"/><rect x="601.5" y="751" width="25.5" height="7" rx="2.5" fill="#705DA0"/><text x="640.7" y="759" font-size="24" fill="#e6e6e6" text-anchor="start" stroke="#e6e6e6" stroke-width="0.5">user</text><text x="806" y="759" font-size="24" fill="#cdcfd1" text-anchor="end" stroke="#cdcfd1" stroke-width="0.5">1%</text></svg>
<svg style="position:absolute;left:864px;top:299px" width="809" height="504" viewBox="864 299 809 504" font-family='"Liberation Sans", sans-serif'><text x="1268.5" y="339" font-size="29.5" fill="#c7c9cc" text-anchor="middle" font-weight="bold" textLength="110.5" lengthAdjust="spacingAndGlyphs" stroke="#c7c9cc" stroke-width="0.6">Memory</text><line x1="997" y1="369.7" x2="1408.6" y2="369.7" stroke="rgba(145,145,145,0.39)" stroke-width="2"/><line x1="997" y1="422.8142857142857" x2="1408.6" y2="422.8142857142857" stroke="rgba(145,145,145,0.39)" stroke-width="2"/><line x1="997" y1="475.92857142857144" x2="1408.6" y2="475.92857142857144" stroke="rgba(145,145,145,0.39)" stroke-width="2"/><line x1="997" y1="529.0428571428572" x2="1408.6" y2="529.0428571428572" stroke="rgba(145,145,145,0.39)" stroke-width="2"/><line x1="997" y1="582.1571428571428" x2="1408.6" y2="582.1571428571428" stroke="rgba(145,145,145,0.39)" stroke-width="2"/><line x1="997" y1="635.2714285714285" x2="1408.6" y2="635.2714285714285" stroke="rgba(145,145,145,0.39)" stroke-width="2"/><line x1="997" y1="688.3857142857144" x2="1408.6" y2="688.3857142857144" stroke="rgba(145,145,145,0.39)" stroke-width="2"/><line x1="997" y1="741.5" x2="1408.6" y2="741.5" stroke="rgba(145,145,145,0.39)" stroke-width="2"/><line x1="1001.8" y1="369.7" x2="1001.8" y2="741.5" stroke="rgba(145,145,145,0.39)" stroke-width="2"/><line x1="1140" y1="369.7" x2="1140" y2="741.5" stroke="rgba(145,145,145,0.39)" stroke-width="2"/><line x1="1275.6" y1="369.7" x2="1275.6" y2="741.5" stroke="rgba(145,145,145,0.39)" stroke-width="2"/><path d="M997.0,714.7 L1222.9,714.7 L1230.3,732.7 L1237.7,714.7 L1408.6,714.7 L1408.6,741.5 L997.0,741.5 Z" fill="#7EB26D" fill-opacity="0.1" stroke="none"/><path d="M997.0,714.7 L1222.9,714.7 L1230.3,732.7 L1237.7,714.7 L1408.6,714.7" fill="none" stroke="#7EB26D" stroke-width="4" stroke-linejoin="round" stroke-linecap="butt"/><path d="M997.0,544.0 L1222.9,544.0 L1230.3,561.0 L1237.7,544.0 L1408.6,544.0 L1408.6,714.7 L1237.7,714.7 L1230.3,732.7 L1222.9,714.7 L997.0,714.7 Z" fill="#EAB839" fill-opacity="0.1" stroke="none"/><path d="M997.0,544.0 L1222.9,544.0 L1230.3,561.0 L1237.7,544.0 L1408.6,544.0" fill="none" stroke="#EAB839" stroke-width="4" stroke-linejoin="round" stroke-linecap="butt"/><path d="M997.0,503.8 L1222.9,503.8 L1230.3,520.8 L1237.7,503.8 L1408.6,503.8 L1408.6,544.0 L1237.7,544.0 L1230.3,561.0 L1222.9,544.0 L997.0,544.0 Z" fill="#6ED0E0" fill-opacity="0.1" stroke="none"/><path d="M997.0,503.8 L1222.9,503.8 L1230.3,520.8 L1237.7,503.8 L1408.6,503.8" fill="none" stroke="#6ED0E0" stroke-width="4" stroke-linejoin="round" stroke-linecap="butt"/><path d="M997.0,422.0 L1408.6,422.0 L1408.6,503.8 L997.0,503.8 Z" fill="#EF843C" fill-opacity="0.1" stroke="none"/><path d="M997.0,422.0 L1408.6,422.0" fill="none" stroke="#EF843C" stroke-width="4" stroke-linejoin="round" stroke-linecap="butt"/><line x1="997" y1="709" x2="1408.6" y2="709" stroke="#5c4036" stroke-width="4"/><line x1="997" y1="686.3" x2="1408.6" y2="686.3" stroke="#5e5526" stroke-width="1.3"/><line x1="997" y1="687.8" x2="1408.6" y2="687.8" stroke="#827b52" stroke-width="1.6"/><path d="M997.0,714.7 L1222.9,714.7 L1230.3,732.7 L1237.7,714.7 L1408.6,714.7" fill="none" stroke="#7EB26D" stroke-width="4" stroke-linejoin="round" stroke-linecap="butt"/><path d="M997.0,544.0 L1222.9,544.0 L1230.3,561.0 L1237.7,544.0 L1408.6,544.0" fill="none" stroke="#EAB839" stroke-width="4" stroke-linejoin="round" stroke-linecap="butt"/><path d="M997.0,503.8 L1222.9,503.8 L1230.3,520.8 L1237.7,503.8 L1408.6,503.8" fill="none" stroke="#6ED0E0" stroke-width="4" stroke-linejoin="round" stroke-linecap="butt"/><path d="M997.0,422.0 L1408.6,422.0" fill="none" stroke="#EF843C" stroke-width="4" stroke-linejoin="round" stroke-linecap="butt"/><line x1="997" y1="741.5" x2="1408.6" y2="741.5" stroke="#444" stroke-width="2"/><text x="985.3" y="377.09999999999997" font-size="24" fill="#c6c9cc" text-anchor="end" stroke="#c6c9cc" stroke-width="0.75">3.4 GiB</text><text x="985.3" y="430.21428571428567" font-size="24" fill="#c6c9cc" text-anchor="end" stroke="#c6c9cc" stroke-width="0.75">2.9 GiB</text><text x="985.3" y="483.3285714285714" font-size="24" fill="#c6c9cc" text-anchor="end" stroke="#c6c9cc" stroke-width="0.75">2.4 GiB</text><text x="985.3" y="536.4428571428572" font-size="24" fill="#c6c9cc" text-anchor="end" stroke="#c6c9cc" stroke-width="0.75">2.0 GiB</text><text x="985.3" y="589.5571428571428" font-size="24" fill="#c6c9cc" text-anchor="end" stroke="#c6c9cc" stroke-width="0.75">1.5 GiB</text><text x="985.3" y="642.6714285714285" font-size="24" fill="#c6c9cc" text-anchor="end" stroke="#c6c9cc" stroke-width="0.75">1000 MiB</text><text x="985.3" y="695.7857142857143" font-size="24" fill="#c6c9cc" text-anchor="end" stroke="#c6c9cc" stroke-width="0.75">500 MiB</text><text x="985.3" y="748.9" font-size="24" fill="#c6c9cc" text-anchor="end" stroke="#c6c9cc" stroke-width="0.75">0 MiB</text><text x="1001" y="778.8" font-size="24" fill="#c6c9cc" text-anchor="middle" textLength="58" lengthAdjust="spacingAndGlyphs" stroke="#c6c9cc" stroke-width="0.75">20:40</text><text x="1139" y="778.8" font-size="24" fill="#c6c9cc" text-anchor="middle" textLength="58" lengthAdjust="spacingAndGlyphs" stroke="#c6c9cc" stroke-width="0.75">20:45</text><text x="1275" y="778.8" font-size="24" fill="#c6c9cc" text-anchor="middle" textLength="58" lengthAdjust="spacingAndGlyphs" stroke="#c6c9cc" stroke-width="0.75">20:50</text><rect x="1446" y="377" width="25.5" height="7" rx="2.5" fill="#7EB26D"/><text x="1480" y="389" font-size="24" fill="#e6e6e6" text-anchor="start" stroke="#e6e6e6" stroke-width="0.5">Free</text><text x="1458.5" y="429.3" font-size="24" fill="#c9cacc" text-anchor="start" stroke="#c9cacc" stroke-width="0.5">Current: 246 MiB</text><rect x="1446" y="469" width="25.5" height="7" rx="2.5" fill="#EAB839"/><text x="1480" y="481" font-size="24" fill="#e6e6e6" text-anchor="start" stroke="#e6e6e6" stroke-width="0.5">Cached</text><text x="1458.5" y="521.3" font-size="24" fill="#c9cacc" text-anchor="start" stroke="#c9cacc" stroke-width="0.5">Current: 1.568 GiB</text><rect x="1446" y="561" width="25.5" height="7" rx="2.5" fill="#6ED0E0"/><text x="1480" y="573" font-size="24" fill="#e6e6e6" text-anchor="start" stroke="#e6e6e6" stroke-width="0.5">Buffered</text><text x="1458.5" y="613.3" font-size="24" fill="#c9cacc" text-anchor="start" stroke="#c9cacc" stroke-width="0.5">Current: 381 MiB</text><rect x="1446" y="653" width="25.5" height="7" rx="2.5" fill="#EF843C"/><text x="1480" y="665" font-size="24" fill="#e6e6e6" text-anchor="start" stroke="#e6e6e6" stroke-width="0.5">Used</text><text x="1458.5" y="705.3" font-size="24" fill="#c9cacc" text-anchor="start" stroke="#c9cacc" stroke-width="0.5">Current: 770 MiB</text></svg>
<svg style="position:absolute;left:1693px;top:299px" width="396" height="504" viewBox="1693 299 396 504" font-family='"Liberation Sans", sans-serif'><text x="1891.0" y="339" font-size="29.5" fill="#c7c9cc" text-anchor="middle" font-weight="bold" textLength="300.5" lengthAdjust="spacingAndGlyphs" stroke="#c7c9cc" stroke-width="0.6">Remaining Disk Space</text><rect x="1705" y="682.5" width="363" height="108.5" fill="#1f2b37"/><line x1="1705" y1="683.5" x2="2068" y2="683.5" stroke="#1f78c1" stroke-width="2"/><text x="1890.5" y="601" font-size="69" fill="#32ac2d" text-anchor="middle" font-weight="bold" textLength="138" lengthAdjust="spacingAndGlyphs" stroke="#32ac2d" stroke-width="0.3">45%</text></svg>
<svg style="position:absolute;left:2109px;top:299px" width="396" height="504" viewBox="2109 299 396 504" font-family='"Liberation Sans", sans-serif'><text x="2307.0" y="339" font-size="29.5" fill="#c7c9cc" text-anchor="middle" font-weight="bold" textLength="75.5" lengthAdjust="spacingAndGlyphs" stroke="#c7c9cc" stroke-width="0.6">Swap</text><rect x="2121" y="682.5" width="363" height="108.5" fill="#1f2b37"/><line x1="2121" y1="683.5" x2="2484" y2="683.5" stroke="#1f78c1" stroke-width="2"/><text x="2306.5" y="601" font-size="69" fill="#d9782a" text-anchor="middle" font-weight="bold" textLength="257" lengthAdjust="spacingAndGlyphs" stroke="#d9782a" stroke-width="0.3">152 MiB</text></svg>
<svg style="position:absolute;left:31px;top:823px" width="812" height="504" viewBox="31 823 812 504" font-family='"Liberation Sans", sans-serif'><text x="436.5" y="863" font-size="29.5" fill="#c7c9cc" text-anchor="middle" font-weight="bold" textLength="162.5" lengthAdjust="spacingAndGlyphs" stroke="#c7c9cc" stroke-width="0.6">Network I/O</text><path d="M150.9,1088.4 L160.8,1097.5 L171.8,1101.4 L182.5,1089.7 L193.4,1079.3 L203.8,1080.1 L214.8,1078.5 L226.0,1083.7 L236.9,1080.1 L246.8,1079.8 L257.2,1081.9 L267.6,1084.5 L278.8,1098.3 L289.3,1087.6 L300.2,1089.2 L310.6,1091.5 L321.6,1085.0 L332.0,1092.3 L342.7,1095.2 L353.6,1081.9 L364.0,1094.1 L374.4,1071.5 L385.4,1067.0 L396.1,1070.2 L406.2,1075.9 L416.9,1080.1 L427.8,1079.3 L438.3,1076.7 L449.2,1096.2 L459.9,1077.4 L470.8,1083.2 L481.2,1076.7 L491.7,1067.0 L502.9,1074.3 L513.8,973.8 L524.2,911.3 L534.6,931.6 L545.1,930.0 L556.0,935.5 L566.4,938.9 L577.6,942.5 L588.0,1046.7 L598.5,1094.1 L608.9,1088.4 L619.8,1080.1 L631.0,1075.9 L641.4,1081.4 L651.9,1074.1 L662.3,1063.6 L672.7,1078.0 L683.1,1079.5 L694.3,1089.2 L704.7,1080.1 L715.7,1075.4 L726.1,1075.9 L737.0,1085.8 L747.4,1076.7 L758.1,1077.2 L769.1,1062.3 L780.0,1079.3 L790.4,1069.6 L790.4,1146.5 L780.0,1150.9 L769.1,1141.8 L758.1,1148.8 L747.4,1148.3 L737.0,1153.5 L726.1,1147.5 L715.7,1147.5 L704.7,1150.9 L694.3,1156.1 L683.1,1150.4 L672.7,1150.1 L662.3,1142.6 L651.9,1148.3 L641.4,1152.5 L631.0,1149.9 L619.8,1150.9 L608.9,1155.3 L598.5,1158.2 L588.0,1163.4 L577.6,1071.5 L566.4,1067.5 L556.0,1066.2 L545.1,1064.9 L534.6,1065.7 L524.2,1055.8 L513.8,1058.4 L502.9,1149.1 L491.7,1146.5 L481.2,1149.1 L470.8,1153.0 L459.9,1150.9 L449.2,1160.0 L438.3,1150.1 L427.8,1151.7 L416.9,1151.4 L406.2,1150.9 L396.1,1147.5 L385.4,1146.2 L374.4,1147.8 L364.0,1158.7 L353.6,1152.2 L342.7,1159.2 L332.0,1157.9 L321.6,1152.7 L310.6,1154.3 L300.2,1154.8 L289.3,1154.8 L278.8,1160.0 L267.6,1153.5 L257.2,1152.5 L246.8,1151.7 L236.9,1152.2 L226.0,1153.5 L214.8,1150.9 L203.8,1151.7 L193.4,1150.4 L182.5,1155.6 L171.8,1161.8 L160.8,1160.5 L150.9,1155.6 Z" fill="#EAB839" fill-opacity="0.1" stroke="none"/><path d="M150.9,1088.4 L160.8,1097.5 L171.8,1101.4 L182.5,1089.7 L193.4,1079.3 L203.8,1080.1 L214.8,1078.5 L226.0,1083.7 L236.9,1080.1 L246.8,1079.8 L257.2,1081.9 L267.6,1084.5 L278.8,1098.3 L289.3,1087.6 L300.2,1089.2 L310.6,1091.5 L321.6,1085.0 L332.0,1092.3 L342.7,1095.2 L353.6,1081.9 L364.0,1094.1 L374.4,1071.5 L385.4,1067.0 L396.1,1070.2 L406.2,1075.9 L416.9,1080.1 L427.8,1079.3 L438.3,1076.7 L449.2,1096.2 L459.9,1077.4 L470.8,1083.2 L481.2,1076.7 L491.7,1067.0 L502.9,1074.3 L513.8,973.8 L524.2,911.3 L534.6,931.6 L545.1,930.0 L556.0,935.5 L566.4,938.9 L577.6,942.5 L588.0,1046.7 L598.5,1094.1 L608.9,1088.4 L619.8,1080.1 L631.0,1075.9 L641.4,1081.4 L651.9,1074.1 L662.3,1063.6 L672.7,1078.0 L683.1,1079.5 L694.3,1089.2 L704.7,1080.1 L715.7,1075.4 L726.1,1075.9 L737.0,1085.8 L747.4,1076.7 L758.1,1077.2 L769.1,1062.3 L780.0,1079.3 L790.4,1069.6" fill="none" stroke="#EAB839" stroke-width="4" stroke-linejoin="round" stroke-linecap="butt"/><path d="M150.9,1155.6 L160.8,1160.5 L171.8,1161.8 L182.5,1155.6 L193.4,1150.4 L203.8,1151.7 L214.8,1150.9 L226.0,1153.5 L236.9,1152.2 L246.8,1151.7 L257.2,1152.5 L267.6,1153.5 L278.8,1160.0 L289.3,1154.8 L300.2,1154.8 L310.6,1154.3 L321.6,1152.7 L332.0,1157.9 L342.7,1159.2 L353.6,1152.2 L364.0,1158.7 L374.4,1147.8 L385.4,1146.2 L396.1,1147.5 L406.2,1150.9 L416.9,1151.4 L427.8,1151.7 L438.3,1150.1 L449.2,1160.0 L459.9,1150.9 L470.8,1153.0 L481.2,1149.1 L491.7,1146.5 L502.9,1149.1 L513.8,1058.4 L524.2,1055.8 L534.6,1065.7 L545.1,1064.9 L556.0,1066.2 L566.4,1067.5 L577.6,1071.5 L588.0,1163.4 L598.5,1158.2 L608.9,1155.3 L619.8,1150.9 L631.0,1149.9 L641.4,1152.5 L651.9,1148.3 L662.3,1142.6 L672.7,1150.1 L683.1,1150.4 L694.3,1156.1 L704.7,1150.9 L715.7,1147.5 L726.1,1147.5 L737.0,1153.5 L747.4,1148.3 L758.1,1148.8 L769.1,1141.8 L780.0,1150.9 L790.4,1146.5 L790.4,1213.5 L150.9,1213.5 Z" fill="#7EB26D" fill-opacity="0.1" stroke="none"/><path d="M150.9,1155.6 L160.8,1160.5 L171.8,1161.8 L182.5,1155.6 L193.4,1150.4 L203.8,1151.7 L214.8,1150.9 L226.0,1153.5 L236.9,1152.2 L246.8,1151.7 L257.2,1152.5 L267.6,1153.5 L278.8,1160.0 L289.3,1154.8 L300.2,1154.8 L310.6,1154.3 L321.6,1152.7 L332.0,1157.9 L342.7,1159.2 L353.6,1152.2 L364.0,1158.7 L374.4,1147.8 L385.4,1146.2 L396.1,1147.5 L406.2,1150.9 L416.9,1151.4 L427.8,1151.7 L438.3,1150.1 L449.2,1160.0 L459.9,1150.9 L470.8,1153.0 L481.2,1149.1 L491.7,1146.5 L502.9,1149.1 L513.8,1058.4 L524.2,1055.8 L534.6,1065.7 L545.1,1064.9 L556.0,1066.2 L566.4,1067.5 L577.6,1071.5 L588.0,1163.4 L598.5,1158.2 L608.9,1155.3 L619.8,1150.9 L631.0,1149.9 L641.4,1152.5 L651.9,1148.3 L662.3,1142.6 L672.7,1150.1 L683.1,1150.4 L694.3,1156.1 L704.7,1150.9 L715.7,1147.5 L726.1,1147.5 L737.0,1153.5 L747.4,1148.3 L758.1,1148.8 L769.1,1141.8 L780.0,1150.9 L790.4,1146.5" fill="none" stroke="#7EB26D" stroke-width="4" stroke-linejoin="round" stroke-linecap="butt"/><line x1="151" y1="893.7" x2="791" y2="893.7" stroke="rgba(145,145,145,0.39)" stroke-width="2"/><line x1="151" y1="957.6600000000001" x2="791" y2="957.6600000000001" stroke="rgba(145,145,145,0.39)" stroke-width="2"/><line x1="151" y1="1021.62" x2="791" y2="1021.62" stroke="rgba(145,145,145,0.39)" stroke-width="2"/><line x1="151" y1="1085.58" x2="791" y2="1085.58" stroke="rgba(145,145,145,0.39)" stroke-width="2"/><line x1="151" y1="1149.54" x2="791" y2="1149.54" stroke="rgba(145,145,145,0.39)" stroke-width="2"/><line x1="151" y1="1213.5" x2="791" y2="1213.5" stroke="rgba(145,145,145,0.39)" stroke-width="2"/><line x1="160" y1="893.7" x2="160" y2="1213.5" stroke="rgba(145,145,145,0.39)" stroke-width="2"/><line x1="372" y1="893.7" x2="372" y2="1213.5" stroke="rgba(145,145,145,0.39)" stroke-width="2"/><line x1="586" y1="893.7" x2="586" y2="1213.5" stroke="rgba(145,145,145,0.39)" stroke-width="2"/><path d="M150.9,1088.4 L160.8,1097.5 L171.8,1101.4 L182.5,1089.7 L193.4,1079.3 L203.8,1080.1 L214.8,1078.5 L226.0,1083.7 L236.9,1080.1 L246.8,1079.8 L257.2,1081.9 L267.6,1084.5 L278.8,1098.3 L289.3,1087.6 L300.2,1089.2 L310.6,1091.5 L321.6,1085.0 L332.0,1092.3 L342.7,1095.2 L353.6,1081.9 L364.0,1094.1 L374.4,1071.5 L385.4,1067.0 L396.1,1070.2 L406.2,1075.9 L416.9,1080.1 L427.8,1079.3 L438.3,1076.7 L449.2,1096.2 L459.9,1077.4 L470.8,1083.2 L481.2,1076.7 L491.7,1067.0 L502.9,1074.3 L513.8,973.8 L524.2,911.3 L534.6,931.6 L545.1,930.0 L556.0,935.5 L566.4,938.9 L577.6,942.5 L588.0,1046.7 L598.5,1094.1 L608.9,1088.4 L619.8,1080.1 L631.0,1075.9 L641.4,1081.4 L651.9,1074.1 L662.3,1063.6 L672.7,1078.0 L683.1,1079.5 L694.3,1089.2 L704.7,1080.1 L715.7,1075.4 L726.1,1075.9 L737.0,1085.8 L747.4,1076.7 L758.1,1077.2 L769.1,1062.3 L780.0,1079.3 L790.4,1069.6" fill="none" stroke="#EAB839" stroke-width="4" stroke-linejoin="round" stroke-linecap="butt"/><path d="M150.9,1155.6 L160.8,1160.5 L171.8,1161.8 L182.5,1155.6 L193.4,1150.4 L203.8,1151.7 L214.8,1150.9 L226.0,1153.5 L236.9,1152.2 L246.8,1151.7 L257.2,1152.5 L267.6,1153.5 L278.8,1160.0 L289.3,1154.8 L300.2,1154.8 L310.6,1154.3 L321.6,1152.7 L332.0,1157.9 L342.7,1159.2 L353.6,1152.2 L364.0,1158.7 L374.4,1147.8 L385.4,1146.2 L396.1,1147.5 L406.2,1150.9 L416.9,1151.4 L427.8,1151.7 L438.3,1150.1 L449.2,1160.0 L459.9,1150.9 L470.8,1153.0 L481.2,1149.1 L491.7,1146.5 L502.9,1149.1 L513.8,1058.4 L524.2,1055.8 L534.6,1065.7 L545.1,1064.9 L556.0,1066.2 L566.4,1067.5 L577.6,1071.5 L588.0,1163.4 L598.5,1158.2 L608.9,1155.3 L619.8,1150.9 L631.0,1149.9 L641.4,1152.5 L651.9,1148.3 L662.3,1142.6 L672.7,1150.1 L683.1,1150.4 L694.3,1156.1 L704.7,1150.9 L715.7,1147.5 L726.1,1147.5 L737.0,1153.5 L747.4,1148.3 L758.1,1148.8 L769.1,1141.8 L780.0,1150.9 L790.4,1146.5" fill="none" stroke="#7EB26D" stroke-width="4" stroke-linejoin="round" stroke-linecap="butt"/><line x1="151" y1="1213.5" x2="791" y2="1213.5" stroke="#444" stroke-width="2"/><text x="141" y="901.1" font-size="24" fill="#c6c9cc" text-anchor="end" stroke="#c6c9cc" stroke-width="0.75">13 kBps</text><text x="141" y="965.0600000000001" font-size="24" fill="#c6c9cc" text-anchor="end" stroke="#c6c9cc" stroke-width="0.75">10 kBps</text><text x="141" y="1029.02" font-size="24" fill="#c6c9cc" text-anchor="end" stroke="#c6c9cc" stroke-width="0.75">8 kBps</text><text x="141" y="1092.98" font-size="24" fill="#c6c9cc" text-anchor="end" stroke="#c6c9cc" stroke-width="0.75">5 kBps</text><text x="141" y="1156.94" font-size="24" fill="#c6c9cc" text-anchor="end" stroke="#c6c9cc" stroke-width="0.75">3 kBps</text><text x="141" y="1220.9" font-size="24" fill="#c6c9cc" text-anchor="end" stroke="#c6c9cc" stroke-width="0.75">0 Bps</text><text x="159.7" y="1250.5" font-size="24" fill="#c6c9cc" text-anchor="middle" textLength="58" lengthAdjust="spacingAndGlyphs" stroke="#c6c9cc" stroke-width="0.75">20:40</text><text x="372" y="1250.5" font-size="24" fill="#c6c9cc" text-anchor="middle" textLength="58" lengthAdjust="spacingAndGlyphs" stroke="#c6c9cc" stroke-width="0.75">20:45</text><text x="586" y="1250.5" font-size="24" fill="#c6c9cc" text-anchor="middle" textLength="58" lengthAdjust="spacingAndGlyphs" stroke="#c6c9cc" stroke-width="0.75">20:50</text><rect x="113.3" y="1292" width="25" height="7" rx="2.5" fill="#7EB26D"/><text x="146.7" y="1303" font-size="24" fill="#e6e6e6" text-anchor="start" textLength="97" lengthAdjust="spacingAndGlyphs" stroke="#e6e6e6" stroke-width="0.5">Received</text><text x="257" y="1303" font-size="24" fill="#d0d1d3" text-anchor="start" textLength="128" lengthAdjust="spacingAndGlyphs" stroke="#d0d1d3" stroke-width="0.5">Avg: 3 kBps</text><rect x="405" y="1292" width="25.5" height="7" rx="2.5" fill="#EAB839"/><text x="438.4" y="1303" font-size="24" fill="#e6e6e6" text-anchor="start" textLength="124.5" lengthAdjust="spacingAndGlyphs" stroke="#e6e6e6" stroke-width="0.5">Transmitted</text><text x="575" y="1303" font-size="24" fill="#d0d1d3" text-anchor="start" textLength="128" lengthAdjust="spacingAndGlyphs" stroke="#d0d1d3" stroke-width="0.5">Avg: 3 kBps</text></svg>
<svg style="position:absolute;left:863px;top:823px" width="810" height="504" viewBox="863 823 810 504" font-family='"Liberation Sans", sans-serif'><text x="1268" y="863" font-size="29.5" fill="#c7c9cc" text-anchor="middle" font-weight="bold" textLength="222.5" lengthAdjust="spacingAndGlyphs" stroke="#c7c9cc" stroke-width="0.6">Disk Throughput</text><line x1="995" y1="894.0" x2="1502.6" y2="894.0" stroke="rgba(145,145,145,0.39)" stroke-width="2"/><line x1="995" y1="968.08" x2="1502.6" y2="968.08" stroke="rgba(145,145,145,0.39)" stroke-width="2"/><line x1="995" y1="1042.16" x2="1502.6" y2="1042.16" stroke="rgba(145,145,145,0.39)" stroke-width="2"/><line x1="995" y1="1116.24" x2="1502.6" y2="1116.24" stroke="rgba(145,145,145,0.39)" stroke-width="2"/><line x1="995" y1="1190.3200000000002" x2="1502.6" y2="1190.3200000000002" stroke="rgba(145,145,145,0.39)" stroke-width="2"/><line x1="995" y1="1264.4" x2="1502.6" y2="1264.4" stroke="rgba(145,145,145,0.39)" stroke-width="2"/><line x1="1002" y1="894" x2="1002" y2="1264.4" stroke="rgba(145,145,145,0.39)" stroke-width="2"/><line x1="1170" y1="894" x2="1170" y2="1264.4" stroke="rgba(145,145,145,0.39)" stroke-width="2"/><line x1="1340" y1="894" x2="1340" y2="1264.4" stroke="rgba(145,145,145,0.39)" stroke-width="2"/><path d="M994.8,1264.0 L1274.7,1264.0 L1283.2,1128.8 L1290.6,1264.0 L1502.6,1264.0 L1502.6,1264.4 L994.8,1264.4 Z" fill="#7EB26D" fill-opacity="0.1" stroke="none"/><path d="M994.8,1264.0 L1274.7,1264.0 L1283.2,1128.8 L1290.6,1264.0 L1502.6,1264.0" fill="none" stroke="#7EB26D" stroke-width="3.5" stroke-linejoin="round" stroke-linecap="butt"/><path d="M994.8,1262.7 L1003.3,1256.0 L1011.8,1255.5 L1020.3,1257.0 L1028.8,1257.0 L1037.2,1260.6 L1045.7,1260.6 L1054.2,1260.6 L1062.7,1259.1 L1071.2,1260.6 L1079.6,1260.6 L1088.1,1260.6 L1096.6,1259.1 L1105.1,1260.6 L1113.6,1260.6 L1122.0,1260.6 L1130.5,1257.0 L1139.0,1260.6 L1147.5,1260.6 L1156.0,1260.6 L1164.4,1259.1 L1172.9,1260.6 L1181.4,1260.6 L1189.9,1260.6 L1198.4,1256.0 L1206.8,1260.2 L1215.3,1256.0 L1223.8,1260.6 L1232.3,1260.6 L1240.8,1255.5 L1249.2,1259.1 L1257.7,1254.9 L1266.2,1260.6 L1274.7,1259.1 L1283.2,1252.8 L1290.6,1234.8 L1299.1,1247.5 L1307.5,1260.6 L1317.1,1260.6 L1325.6,1260.6 L1334.0,1258.1 L1342.5,1260.6 L1351.0,1252.8 L1359.5,1260.6 L1368.0,1252.8 L1376.4,1260.6 L1384.9,1260.6 L1393.4,1260.6 L1401.9,1257.0 L1410.4,1256.0 L1418.8,1260.6 L1427.3,1260.2 L1435.8,1260.6 L1444.3,1260.6 L1452.8,1258.1 L1461.2,1260.6 L1469.7,1260.6 L1478.2,1260.6 L1486.7,1258.1 L1495.2,1260.6 L1502.6,1260.6 L1502.6,1264.4 L994.8,1264.4 Z" fill="#EAB839" fill-opacity="0.1" stroke="none"/><path d="M994.8,1262.7 L1003.3,1256.0 L1011.8,1255.5 L1020.3,1257.0 L1028.8,1257.0 L1037.2,1260.6 L1045.7,1260.6 L1054.2,1260.6 L1062.7,1259.1 L1071.2,1260.6 L1079.6,1260.6 L1088.1,1260.6 L1096.6,1259.1 L1105.1,1260.6 L1113.6,1260.6 L1122.0,1260.6 L1130.5,1257.0 L1139.0,1260.6 L1147.5,1260.6 L1156.0,1260.6 L1164.4,1259.1 L1172.9,1260.6 L1181.4,1260.6 L1189.9,1260.6 L1198.4,1256.0 L1206.8,1260.2 L1215.3,1256.0 L1223.8,1260.6 L1232.3,1260.6 L1240.8,1255.5 L1249.2,1259.1 L1257.7,1254.9 L1266.2,1260.6 L1274.7,1259.1 L1283.2,1252.8 L1290.6,1234.8 L1299.1,1247.5 L1307.5,1260.6 L1317.1,1260.6 L1325.6,1260.6 L1334.0,1258.1 L1342.5,1260.6 L1351.0,1252.8 L1359.5,1260.6 L1368.0,1252.8 L1376.4,1260.6 L1384.9,1260.6 L1393.4,1260.6 L1401.9,1257.0 L1410.4,1256.0 L1418.8,1260.6 L1427.3,1260.2 L1435.8,1260.6 L1444.3,1260.6 L1452.8,1258.1 L1461.2,1260.6 L1469.7,1260.6 L1478.2,1260.6 L1486.7,1258.1 L1495.2,1260.6 L1502.6,1260.6" fill="none" stroke="#EAB839" stroke-width="4" stroke-linejoin="round" stroke-linecap="butt"/><path d="M994.8,1251.7 L1003.3,1249.6 L1011.8,1233.7 L1020.3,1251.7 L1028.8,1235.8 L1037.2,1248.5 L1045.7,1251.7 L1054.2,1254.9 L1062.7,1251.7 L1071.2,1252.8 L1079.6,1249.6 L1088.1,1249.6 L1096.6,1245.4 L1105.1,1249.6 L1113.6,1244.3 L1122.0,1256.0 L1130.5,1247.5 L1139.0,1249.6 L1147.5,1251.7 L1156.0,1252.8 L1164.4,1251.7 L1172.9,1249.6 L1181.4,1250.7 L1189.9,1249.6 L1198.4,1237.9 L1206.8,1249.6 L1215.3,1245.4 L1223.8,1257.0 L1232.3,1246.4 L1240.8,1251.7 L1249.2,1249.6 L1257.7,1249.6 L1266.2,1247.5 L1274.7,1245.4 L1283.2,1247.5 L1290.6,1245.4 L1299.1,1241.1 L1307.5,1249.6 L1317.1,1246.4 L1325.6,1258.1 L1334.0,1240.1 L1342.5,1256.0 L1351.0,1222.5 L1359.5,1251.7 L1368.0,1234.8 L1376.4,1251.7 L1384.9,1249.6 L1393.4,1247.5 L1401.9,1249.6 L1410.4,1251.7 L1418.8,1249.6 L1427.3,1251.7 L1435.8,1241.1 L1444.3,1252.8 L1452.8,1237.9 L1461.2,1257.0 L1469.7,1241.1 L1478.2,1251.7 L1486.7,1249.6 L1495.2,1251.7 L1502.6,1251.7 L1502.6,1264.4 L994.8,1264.4 Z" fill="#6ED0E0" fill-opacity="0.1" stroke="none"/><path d="M994.8,1251.7 L1003.3,1249.6 L1011.8,1233.7 L1020.3,1251.7 L1028.8,1235.8 L1037.2,1248.5 L1045.7,1251.7 L1054.2,1254.9 L1062.7,1251.7 L1071.2,1252.8 L1079.6,1249.6 L1088.1,1249.6 L1096.6,1245.4 L1105.1,1249.6 L1113.6,1244.3 L1122.0,1256.0 L1130.5,1247.5 L1139.0,1249.6 L1147.5,1251.7 L1156.0,1252.8 L1164.4,1251.7 L1172.9,1249.6 L1181.4,1250.7 L1189.9,1249.6 L1198.4,1237.9 L1206.8,1249.6 L1215.3,1245.4 L1223.8,1257.0 L1232.3,1246.4 L1240.8,1251.7 L1249.2,1249.6 L1257.7,1249.6 L1266.2,1247.5 L1274.7,1245.4 L1283.2,1247.5 L1290.6,1245.4 L1299.1,1241.1 L1307.5,1249.6 L1317.1,1246.4 L1325.6,1258.1 L1334.0,1240.1 L1342.5,1256.0 L1351.0,1222.5 L1359.5,1251.7 L1368.0,1234.8 L1376.4,1251.7 L1384.9,1249.6 L1393.4,1247.5 L1401.9,1249.6 L1410.4,1251.7 L1418.8,1249.6 L1427.3,1251.7 L1435.8,1241.1 L1444.3,1252.8 L1452.8,1237.9 L1461.2,1257.0 L1469.7,1241.1 L1478.2,1251.7 L1486.7,1249.6 L1495.2,1251.7 L1502.6,1251.7" fill="none" stroke="#6ED0E0" stroke-width="4" stroke-linejoin="round" stroke-linecap="butt"/><path d="M994.8,1212.5 L1003.3,1216.7 L1011.8,1216.7 L1020.3,1222.5 L1028.8,1215.7 L1037.2,1215.7 L1045.7,1215.7 L1054.2,1215.7 L1062.7,1215.7 L1071.2,1215.7 L1079.6,1215.7 L1088.1,1222.0 L1096.6,1216.7 L1105.1,1215.7 L1113.6,1215.7 L1122.0,1222.5 L1130.5,1213.6 L1139.0,1215.7 L1147.5,1215.7 L1156.0,1215.7 L1164.4,1215.7 L1172.9,1222.0 L1181.4,1215.7 L1189.9,1214.6 L1198.4,1215.7 L1206.8,1215.7 L1215.3,1215.7 L1223.8,1215.7 L1232.3,1214.6 L1240.8,1211.0 L1249.2,1218.9 L1257.7,1211.4 L1266.2,1216.7 L1274.7,1216.7 L1290.6,996.0 L1299.1,1173.3 L1307.5,1222.5 L1317.1,1215.7 L1325.6,1216.7 L1334.0,1215.7 L1342.5,1222.5 L1351.0,1215.7 L1359.5,1215.7 L1368.0,1215.7 L1376.4,1215.7 L1384.9,1215.7 L1393.4,1215.7 L1401.9,1215.7 L1410.4,1215.7 L1418.8,1222.5 L1427.3,1214.6 L1435.8,1214.6 L1444.3,1213.6 L1452.8,1222.5 L1461.2,1215.7 L1469.7,1215.7 L1478.2,1215.7 L1486.7,1215.7 L1495.2,1215.7 L1502.6,1215.7 L1502.6,1264.4 L994.8,1264.4 Z" fill="#EF843C" fill-opacity="0.1" stroke="none"/><path d="M994.8,1212.5 L1003.3,1216.7 L1011.8,1216.7 L1020.3,1222.5 L1028.8,1215.7 L1037.2,1215.7 L1045.7,1215.7 L1054.2,1215.7 L1062.7,1215.7 L1071.2,1215.7 L1079.6,1215.7 L1088.1,1222.0 L1096.6,1216.7 L1105.1,1215.7 L1113.6,1215.7 L1122.0,1222.5 L1130.5,1213.6 L1139.0,1215.7 L1147.5,1215.7 L1156.0,1215.7 L1164.4,1215.7 L1172.9,1222.0 L1181.4,1215.7 L1189.9,1214.6 L1198.4,1215.7 L1206.8,1215.7 L1215.3,1215.7 L1223.8,1215.7 L1232.3,1214.6 L1240.8,1211.0 L1249.2,1218.9 L1257.7,1211.4 L1266.2,1216.7 L1274.7,1216.7 L1290.6,996.0 L1299.1,1173.3 L1307.5,1222.5 L1317.1,1215.7 L1325.6,1216.7 L1334.0,1215.7 L1342.5,1222.5 L1351.0,1215.7 L1359.5,1215.7 L1368.0,1215.7 L1376.4,1215.7 L1384.9,1215.7 L1393.4,1215.7 L1401.9,1215.7 L1410.4,1215.7 L1418.8,1222.5 L1427.3,1214.6 L1435.8,1214.6 L1444.3,1213.6 L1452.8,1222.5 L1461.2,1215.7 L1469.7,1215.7 L1478.2,1215.7 L1486.7,1215.7 L1495.2,1215.7 L1502.6,1215.7" fill="none" stroke="#EF843C" stroke-width="4" stroke-linejoin="round" stroke-linecap="butt"/><path d="M994.8,1190.2 L1003.3,1195.5 L1011.8,1175.4 L1020.3,1200.8 L1028.8,1179.6 L1037.2,1196.2 L1045.7,1197.2 L1054.2,1202.5 L1062.7,1192.4 L1071.2,1199.8 L1079.6,1194.5 L1088.1,1206.1 L1096.6,1190.2 L1105.1,1198.3 L1113.6,1190.9 L1122.0,1209.7 L1130.5,1190.2 L1139.0,1197.7 L1147.5,1197.7 L1156.0,1199.1 L1164.4,1195.5 L1172.9,1203.0 L1181.4,1197.2 L1189.9,1197.2 L1198.4,1181.3 L1206.8,1196.2 L1215.3,1191.3 L1223.8,1205.1 L1232.3,1192.4 L1240.8,1191.3 L1249.2,1198.3 L1257.7,1190.2 L1266.2,1197.7 L1274.7,1192.4 L1290.6,944.1 L1299.1,1141.5 L1307.5,1203.0 L1317.1,1193.4 L1325.6,1207.2 L1334.0,1184.9 L1342.5,1211.4 L1351.0,1161.6 L1359.5,1203.0 L1368.0,1173.3 L1376.4,1200.4 L1384.9,1201.3 L1393.4,1192.4 L1401.9,1196.6 L1410.4,1192.4 L1418.8,1204.0 L1427.3,1199.4 L1435.8,1187.1 L1444.3,1197.7 L1452.8,1189.2 L1461.2,1204.7 L1469.7,1188.5 L1478.2,1201.9 L1486.7,1193.4 L1495.2,1199.1 L1502.6,1199.1 L1502.6,1264.4 L994.8,1264.4 Z" fill="#1F78C1" fill-opacity="0.1" stroke="none"/><path d="M994.8,1190.2 L1003.3,1195.5 L1011.8,1175.4 L1020.3,1200.8 L1028.8,1179.6 L1037.2,1196.2 L1045.7,1197.2 L1054.2,1202.5 L1062.7,1192.4 L1071.2,1199.8 L1079.6,1194.5 L1088.1,1206.1 L1096.6,1190.2 L1105.1,1198.3 L1113.6,1190.9 L1122.0,1209.7 L1130.5,1190.2 L1139.0,1197.7 L1147.5,1197.7 L1156.0,1199.1 L1164.4,1195.5 L1172.9,1203.0 L1181.4,1197.2 L1189.9,1197.2 L1198.4,1181.3 L1206.8,1196.2 L1215.3,1191.3 L1223.8,1205.1 L1232.3,1192.4 L1240.8,1191.3 L1249.2,1198.3 L1257.7,1190.2 L1266.2,1197.7 L1274.7,1192.4 L1290.6,944.1 L1299.1,1141.5 L1307.5,1203.0 L1317.1,1193.4 L1325.6,1207.2 L1334.0,1184.9 L1342.5,1211.4 L1351.0,1161.6 L1359.5,1203.0 L1368.0,1173.3 L1376.4,1200.4 L1384.9,1201.3 L1393.4,1192.4 L1401.9,1196.6 L1410.4,1192.4 L1418.8,1204.0 L1427.3,1199.4 L1435.8,1187.1 L1444.3,1197.7 L1452.8,1189.2 L1461.2,1204.7 L1469.7,1188.5 L1478.2,1201.9 L1486.7,1193.4 L1495.2,1199.1 L1502.6,1199.1" fill="none" stroke="#1F78C1" stroke-width="4" stroke-linejoin="round" stroke-linecap="butt"/><path d="M994.8,1244.3 L1003.3,1252.8 L1011.8,1254.9 L1020.3,1240.1 L1028.8,1257.0 L1037.2,1245.4 L1045.7,1252.8 L1054.2,1252.8 L1062.7,1245.4 L1071.2,1256.0 L1079.6,1241.1 L1088.1,1256.0 L1096.6,1249.6 L1105.1,1249.6 L1113.6,1249.6 L1122.0,1242.2 L1130.5,1258.1 L1139.0,1244.3 L1147.5,1251.7 L1156.0,1246.4 L1164.4,1245.4 L1172.9,1248.5 L1181.4,1250.7 L1189.9,1249.6 L1198.4,1249.6 L1206.8,1246.4 L1215.3,1259.1 L1223.8,1248.5 L1232.3,1250.7 L1240.8,1251.3 L1249.2,1248.5 L1257.7,1250.7 L1266.2,1247.5 L1274.7,1249.6 L1283.2,1249.6 L1290.6,1241.1 L1299.1,1247.5 L1307.5,1256.0 L1317.1,1251.7 L1325.6,1247.5 L1334.0,1245.4 L1342.5,1256.0 L1351.0,1242.2 L1359.5,1249.6 L1368.0,1248.5 L1376.4,1245.4 L1384.9,1258.1 L1393.4,1237.9 L1401.9,1254.9 L1410.4,1253.8 L1418.8,1243.2 L1427.3,1256.0 L1435.8,1247.5 L1444.3,1249.6 L1452.8,1247.5 L1461.2,1244.3 L1469.7,1249.6 L1478.2,1256.0 L1486.7,1248.5 L1495.2,1247.5 L1502.6,1244.3 L1502.6,1264.4 L994.8,1264.4 Z" fill="#705DA0" fill-opacity="0.1" stroke="none"/><path d="M994.8,1244.3 L1003.3,1252.8 L1011.8,1254.9 L1020.3,1240.1 L1028.8,1257.0 L1037.2,1245.4 L1045.7,1252.8 L1054.2,1252.8 L1062.7,1245.4 L1071.2,1256.0 L1079.6,1241.1 L1088.1,1256.0 L1096.6,1249.6 L1105.1,1249.6 L1113.6,1249.6 L1122.0,1242.2 L1130.5,1258.1 L1139.0,1244.3 L1147.5,1251.7 L1156.0,1246.4 L1164.4,1245.4 L1172.9,1248.5 L1181.4,1250.7 L1189.9,1249.6 L1198.4,1249.6 L1206.8,1246.4 L1215.3,1259.1 L1223.8,1248.5 L1232.3,1250.7 L1240.8,1251.3 L1249.2,1248.5 L1257.7,1250.7 L1266.2,1247.5 L1274.7,1249.6 L1283.2,1249.6 L1290.6,1241.1 L1299.1,1247.5 L1307.5,1256.0 L1317.1,1251.7 L1325.6,1247.5 L1334.0,1245.4 L1342.5,1256.0 L1351.0,1242.2 L1359.5,1249.6 L1368.0,1248.5 L1376.4,1245.4 L1384.9,1258.1 L1393.4,1237.9 L1401.9,1254.9 L1410.4,1253.8 L1418.8,1243.2 L1427.3,1256.0 L1435.8,1247.5 L1444.3,1249.6 L1452.8,1247.5 L1461.2,1244.3 L1469.7,1249.6 L1478.2,1256.0 L1486.7,1248.5 L1495.2,1247.5 L1502.6,1244.3" fill="none" stroke="#705DA0" stroke-width="4" stroke-linejoin="round" stroke-linecap="butt"/><line x1="995" y1="1263.9" x2="1502.6" y2="1263.9" stroke="#508642" stroke-width="4"/><text x="984.4" y="901.4" font-size="24" fill="#c6c9cc" text-anchor="end" stroke="#c6c9cc" stroke-width="0.75">100 kBps</text><text x="984.4" y="975.48" font-size="24" fill="#c6c9cc" text-anchor="end" stroke="#c6c9cc" stroke-width="0.75">80 kBps</text><text x="984.4" y="1049.5600000000002" font-size="24" fill="#c6c9cc" text-anchor="end" stroke="#c6c9cc" stroke-width="0.75">60 kBps</text><text x="984.4" y="1123.64" font-size="24" fill="#c6c9cc" text-anchor="end" stroke="#c6c9cc" stroke-width="0.75">40 kBps</text><text x="984.4" y="1197.7200000000003" font-size="24" fill="#c6c9cc" text-anchor="end" stroke="#c6c9cc" stroke-width="0.75">20 kBps</text><text x="984.4" y="1271.8000000000002" font-size="24" fill="#c6c9cc" text-anchor="end" stroke="#c6c9cc" stroke-width="0.75">0 Bps</text><text x="1001.5" y="1301.5" font-size="24" fill="#c6c9cc" text-anchor="middle" textLength="58" lengthAdjust="spacingAndGlyphs" stroke="#c6c9cc" stroke-width="0.75">20:40</text><text x="1169.5" y="1301.5" font-size="24" fill="#c6c9cc" text-anchor="middle" textLength="58" lengthAdjust="spacingAndGlyphs" stroke="#c6c9cc" stroke-width="0.75">20:45</text><text x="1339.5" y="1301.5" font-size="24" fill="#c6c9cc" text-anchor="middle" textLength="58" lengthAdjust="spacingAndGlyphs" stroke="#c6c9cc" stroke-width="0.75">20:50</text><rect x="1541.5" y="899" width="25" height="7" rx="2.5" fill="#7EB26D"/><text x="1580.4" y="907" font-size="24" fill="#e6e6e6" text-anchor="start" stroke="#e6e6e6" stroke-width="0.5">dm-0</text><rect x="1541" y="923" width="118" height="48" fill="#232323"/><rect x="1541.5" y="947" width="25" height="7" rx="2.5" fill="#EAB839"/><text x="1580.4" y="955" font-size="24" fill="#e6e6e6" text-anchor="start" stroke="#e6e6e6" stroke-width="0.5">dm-1</text><rect x="1541.5" y="995" width="25" height="7" rx="2.5" fill="#6ED0E0"/><text x="1580.4" y="1003" font-size="24" fill="#e6e6e6" text-anchor="start" stroke="#e6e6e6" stroke-width="0.5">dm-2</text><rect x="1541" y="1019" width="118" height="48" fill="#232323"/><rect x="1541.5" y="1043" width="25" height="7" rx="2.5" fill="#EF843C"/><text x="1580.4" y="1051" font-size="24" fill="#e6e6e6" text-anchor="start" stroke="#e6e6e6" stroke-width="0.5">dm-3</text><rect x="1541.5" y="1091" width="25" height="7" rx="2.5" fill="#E24D42"/><text x="1580.4" y="1099" font-size="24" fill="#e6e6e6" text-anchor="start" stroke="#e6e6e6" stroke-width="0.5">dm-4</text><rect x="1541" y="1115" width="118" height="48" fill="#232323"/><rect x="1541.5" y="1139" width="25" height="7" rx="2.5" fill="#1F78C1"/><text x="1580.4" y="1147" font-size="24" fill="#e6e6e6" text-anchor="start" stroke="#e6e6e6" stroke-width="0.5">sda</text><rect x="1541.5" y="1187" width="25" height="7" rx="2.5" fill="#BA43A9"/><text x="1580.4" y="1195" font-size="24" fill="#e6e6e6" text-anchor="start" stroke="#e6e6e6" stroke-width="0.5">sdb</text><rect x="1541" y="1211" width="118" height="48" fill="#232323"/><rect x="1541.5" y="1235" width="25" height="7" rx="2.5" fill="#705DA0"/><text x="1580.4" y="1243" font-size="24" fill="#e6e6e6" text-anchor="start" stroke="#e6e6e6" stroke-width="0.5">sdd</text><rect x="1541.5" y="1283" width="25" height="7" rx="2.5" fill="#508642"/><text x="1580.4" y="1291" font-size="24" fill="#e6e6e6" text-anchor="start" stroke="#e6e6e6" stroke-width="0.5">sr0</text></svg>
<svg style="position:absolute;left:1693px;top:823px" width="812" height="504" viewBox="1693 823 812 504" font-family='"Liberation Sans", sans-serif'><text x="2099" y="863" font-size="29.5" fill="#c7c9cc" text-anchor="middle" font-weight="bold" textLength="200.5" lengthAdjust="spacingAndGlyphs" stroke="#c7c9cc" stroke-width="0.6">Disk Utilization</text><line x1="1783" y1="894.0" x2="2333" y2="894.0" stroke="rgba(145,145,145,0.39)" stroke-width="2"/><line x1="1783" y1="986.55" x2="2333" y2="986.55" stroke="rgba(145,145,145,0.39)" stroke-width="2"/><line x1="1783" y1="1079.1" x2="2333" y2="1079.1" stroke="rgba(145,145,145,0.39)" stroke-width="2"/><line x1="1783" y1="1171.65" x2="2333" y2="1171.65" stroke="rgba(145,145,145,0.39)" stroke-width="2"/><line x1="1783" y1="1264.2" x2="2333" y2="1264.2" stroke="rgba(145,145,145,0.39)" stroke-width="2"/><line x1="1790.5" y1="894" x2="1790.5" y2="1264.2" stroke="rgba(145,145,145,0.39)" stroke-width="2"/><line x1="1974" y1="894" x2="1974" y2="1264.2" stroke="rgba(145,145,145,0.39)" stroke-width="2"/><line x1="2156" y1="894" x2="2156" y2="1264.2" stroke="rgba(145,145,145,0.39)" stroke-width="2"/><path d="M1783.0,1264.2 L1790.6,1264.2 L1800.8,1264.2 L1809.7,1264.2 L1818.7,1264.2 L1828.9,1264.2 L1837.8,1264.2 L1846.8,1264.2 L1856.2,1264.2 L1865.9,1264.2 L1874.8,1251.4 L1883.8,1264.2 L1893.2,1264.2 L1901.6,1264.2 L1911.3,1264.2 L1920.0,1264.2 L1929.2,1264.2 L1938.6,1264.2 L1947.6,1264.2 L1956.5,1264.2 L1966.7,1264.2 L1975.7,1264.2 L1985.3,1264.2 L1994.0,1264.2 L2003.2,1251.4 L2011.9,1264.2 L2021.1,1239.9 L2030.5,1264.2 L2039.5,1227.2 L2048.4,1264.2 L2057.8,1264.2 L2067.0,1251.9 L2075.7,1228.5 L2084.9,1264.2 L2094.3,1214.4 L2103.8,1251.4 L2113.0,1264.2 L2121.6,1264.2 L2130.8,1227.2 L2140.3,1264.2 L2149.2,1239.9 L2158.1,1264.2 L2167.6,1251.9 L2176.8,1264.2 L2186.2,1239.9 L2195.2,1264.2 L2204.1,1251.9 L2213.5,1264.2 L2222.7,1223.3 L2232.2,1177.4 L2241.1,1264.2 L2250.0,1264.2 L2259.5,1264.2 L2268.7,1264.2 L2278.1,1251.9 L2286.5,1264.2 L2296.0,1264.2 L2304.9,1264.2 L2313.8,1264.2 L2323.3,1264.2 L2333.0,1264.2 L2333.0,1264.2 L1783.0,1264.2 Z" fill="#EAB839" fill-opacity="0.1" stroke="none"/><path d="M1783.0,1264.2 L1790.6,1264.2 L1800.8,1264.2 L1809.7,1264.2 L1818.7,1264.2 L1828.9,1264.2 L1837.8,1264.2 L1846.8,1264.2 L1856.2,1264.2 L1865.9,1264.2 L1874.8,1251.4 L1883.8,1264.2 L1893.2,1264.2 L1901.6,1264.2 L1911.3,1264.2 L1920.0,1264.2 L1929.2,1264.2 L1938.6,1264.2 L1947.6,1264.2 L1956.5,1264.2 L1966.7,1264.2 L1975.7,1264.2 L1985.3,1264.2 L1994.0,1264.2 L2003.2,1251.4 L2011.9,1264.2 L2021.1,1239.9 L2030.5,1264.2 L2039.5,1227.2 L2048.4,1264.2 L2057.8,1264.2 L2067.0,1251.9 L2075.7,1228.5 L2084.9,1264.2 L2094.3,1214.4 L2103.8,1251.4 L2113.0,1264.2 L2121.6,1264.2 L2130.8,1227.2 L2140.3,1264.2 L2149.2,1239.9 L2158.1,1264.2 L2167.6,1251.9 L2176.8,1264.2 L2186.2,1239.9 L2195.2,1264.2 L2204.1,1251.9 L2213.5,1264.2 L2222.7,1223.3 L2232.2,1177.4 L2241.1,1264.2 L2250.0,1264.2 L2259.5,1264.2 L2268.7,1264.2 L2278.1,1251.9 L2286.5,1264.2 L2296.0,1264.2 L2304.9,1264.2 L2313.8,1264.2 L2323.3,1264.2 L2333.0,1264.2" fill="none" stroke="#EAB839" stroke-width="4" stroke-linejoin="round" stroke-linecap="butt"/><path d="M1783.0,1254.0 L1790.6,1264.2 L1800.8,1264.2 L1809.7,1264.2 L1818.7,1264.2 L1828.9,1264.2 L1837.8,1264.2 L1846.8,1264.2 L1856.2,1264.2 L1865.9,1264.2 L1874.8,1264.2 L1883.8,1264.2 L1893.2,1251.9 L1901.6,1251.9 L1911.3,1264.2 L1920.0,1264.2 L1929.2,1264.2 L1938.6,1264.2 L1947.6,1264.2 L1956.5,1264.2 L1966.7,1264.2 L1975.7,1264.2 L1985.3,1264.2 L1994.0,1264.2 L2003.2,1264.2 L2011.9,1264.2 L2021.1,1264.2 L2030.5,1251.9 L2039.5,1264.2 L2048.4,1264.2 L2057.8,1264.2 L2067.0,1264.2 L2075.7,1264.2 L2084.9,1264.2 L2094.3,1239.9 L2103.8,1264.2 L2113.0,1264.2 L2121.6,1264.2 L2130.8,1264.2 L2140.3,1264.2 L2149.2,1264.2 L2158.1,1264.2 L2167.6,1264.2 L2176.8,1264.2 L2186.2,1264.2 L2195.2,1264.2 L2204.1,1264.2 L2213.5,1251.9 L2222.7,1264.2 L2232.2,1264.2 L2241.1,1264.2 L2250.0,1251.9 L2259.5,1264.2 L2268.7,1251.9 L2278.1,1264.2 L2286.5,1264.2 L2296.0,1264.2 L2304.9,1264.2 L2313.8,1214.4 L2323.3,1264.2 L2333.0,1264.2 L2333.0,1264.2 L1783.0,1264.2 Z" fill="#6ED0E0" fill-opacity="0.1" stroke="none"/><path d="M1783.0,1254.0 L1790.6,1264.2 L1800.8,1264.2 L1809.7,1264.2 L1818.7,1264.2 L1828.9,1264.2 L1837.8,1264.2 L1846.8,1264.2 L1856.2,1264.2 L1865.9,1264.2 L1874.8,1264.2 L1883.8,1264.2 L1893.2,1251.9 L1901.6,1251.9 L1911.3,1264.2 L1920.0,1264.2 L1929.2,1264.2 L1938.6,1264.2 L1947.6,1264.2 L1956.5,1264.2 L1966.7,1264.2 L1975.7,1264.2 L1985.3,1264.2 L1994.0,1264.2 L2003.2,1264.2 L2011.9,1264.2 L2021.1,1264.2 L2030.5,1251.9 L2039.5,1264.2 L2048.4,1264.2 L2057.8,1264.2 L2067.0,1264.2 L2075.7,1264.2 L2084.9,1264.2 L2094.3,1239.9 L2103.8,1264.2 L2113.0,1264.2 L2121.6,1264.2 L2130.8,1264.2 L2140.3,1264.2 L2149.2,1264.2 L2158.1,1264.2 L2167.6,1264.2 L2176.8,1264.2 L2186.2,1264.2 L2195.2,1264.2 L2204.1,1264.2 L2213.5,1251.9 L2222.7,1264.2 L2232.2,1264.2 L2241.1,1264.2 L2250.0,1251.9 L2259.5,1264.2 L2268.7,1251.9 L2278.1,1264.2 L2286.5,1264.2 L2296.0,1264.2 L2304.9,1264.2 L2313.8,1214.4 L2323.3,1264.2 L2333.0,1264.2" fill="none" stroke="#6ED0E0" stroke-width="4" stroke-linejoin="round" stroke-linecap="butt"/><path d="M1783.0,1195.3 L1790.6,960.5 L1800.8,1215.7 L1809.7,1190.2 L1818.7,1190.2 L1828.9,1202.9 L1837.8,1177.4 L1846.8,1227.9 L1856.2,1202.9 L1865.9,1202.9 L1874.8,1134.0 L1883.8,1192.7 L1893.2,1215.2 L1901.6,1205.5 L1911.3,1215.2 L1920.0,1190.2 L1929.2,1190.2 L1938.6,1228.5 L1947.6,1177.4 L1956.5,1202.9 L1966.7,1190.2 L1975.7,1152.4 L1985.3,1177.4 L1994.0,1190.2 L2003.2,1190.2 L2011.9,1202.9 L2021.1,1190.2 L2030.5,1215.2 L2039.5,1152.4 L2048.4,1177.4 L2057.8,1202.9 L2067.0,1202.9 L2075.7,1225.9 L2084.9,1177.4 L2094.3,1152.4 L2103.8,1103.4 L2113.0,1228.5 L2121.6,1190.2 L2130.8,1190.2 L2140.3,1152.4 L2149.2,1202.9 L2158.1,1215.2 L2167.6,1127.6 L2176.8,1228.5 L2186.2,1177.4 L2195.2,1164.6 L2204.1,1215.2 L2213.5,1202.9 L2222.7,1152.4 L2232.2,1190.2 L2241.1,1190.2 L2250.0,1127.6 L2259.5,1228.5 L2268.7,1164.6 L2278.1,1215.2 L2286.5,1202.9 L2296.0,1177.4 L2304.9,1164.6 L2313.8,1177.4 L2323.3,1190.2 L2333.0,1190.2 L2333.0,1264.2 L1783.0,1264.2 Z" fill="#EF843C" fill-opacity="0.1" stroke="none"/><path d="M1783.0,1195.3 L1790.6,960.5 L1800.8,1215.7 L1809.7,1190.2 L1818.7,1190.2 L1828.9,1202.9 L1837.8,1177.4 L1846.8,1227.9 L1856.2,1202.9 L1865.9,1202.9 L1874.8,1134.0 L1883.8,1192.7 L1893.2,1215.2 L1901.6,1205.5 L1911.3,1215.2 L1920.0,1190.2 L1929.2,1190.2 L1938.6,1228.5 L1947.6,1177.4 L1956.5,1202.9 L1966.7,1190.2 L1975.7,1152.4 L1985.3,1177.4 L1994.0,1190.2 L2003.2,1190.2 L2011.9,1202.9 L2021.1,1190.2 L2030.5,1215.2 L2039.5,1152.4 L2048.4,1177.4 L2057.8,1202.9 L2067.0,1202.9 L2075.7,1225.9 L2084.9,1177.4 L2094.3,1152.4 L2103.8,1103.4 L2113.0,1228.5 L2121.6,1190.2 L2130.8,1190.2 L2140.3,1152.4 L2149.2,1202.9 L2158.1,1215.2 L2167.6,1127.6 L2176.8,1228.5 L2186.2,1177.4 L2195.2,1164.6 L2204.1,1215.2 L2213.5,1202.9 L2222.7,1152.4 L2232.2,1190.2 L2241.1,1190.2 L2250.0,1127.6 L2259.5,1228.5 L2268.7,1164.6 L2278.1,1215.2 L2286.5,1202.9 L2296.0,1177.4 L2304.9,1164.6 L2313.8,1177.4 L2323.3,1190.2 L2333.0,1190.2" fill="none" stroke="#EF843C" stroke-width="4" stroke-linejoin="round" stroke-linecap="butt"/><path d="M1783.0,1264.2 L1790.6,1264.2 L1800.8,1264.2 L1809.7,1264.2 L1818.7,1264.2 L1828.9,1264.2 L1837.8,1264.2 L1846.8,1264.2 L1856.2,1264.2 L1865.9,1264.2 L1874.8,1264.2 L1883.8,1264.2 L1893.2,1264.2 L1901.6,1264.2 L1911.3,1264.2 L1920.0,1264.2 L1929.2,1264.2 L1938.6,1264.2 L1947.6,1264.2 L1956.5,1264.2 L1966.7,1251.9 L1975.7,1264.2 L1985.3,1264.2 L1994.0,1264.2 L2003.2,1264.2 L2011.9,1264.2 L2021.1,1264.2 L2030.5,1264.2 L2039.5,1264.2 L2048.4,1264.2 L2057.8,1264.2 L2067.0,1264.2 L2075.7,1264.2 L2084.9,1264.2 L2094.3,1264.2 L2103.8,1264.2 L2113.0,1264.2 L2121.6,1264.2 L2130.8,1264.2 L2140.3,1264.2 L2149.2,1264.2 L2158.1,1264.2 L2167.6,1264.2 L2176.8,1264.2 L2186.2,1264.2 L2195.2,1264.2 L2204.1,1264.2 L2213.5,1264.2 L2222.7,1264.2 L2232.2,1264.2 L2241.1,1264.2 L2250.0,1264.2 L2259.5,1264.2 L2268.7,1264.2 L2278.1,1264.2 L2286.5,1264.2 L2296.0,1264.2 L2304.9,1264.2 L2313.8,1264.2 L2323.3,1264.2 L2333.0,1264.2 L2333.0,1264.2 L1783.0,1264.2 Z" fill="#E24D42" fill-opacity="0.1" stroke="none"/><path d="M1783.0,1264.2 L1790.6,1264.2 L1800.8,1264.2 L1809.7,1264.2 L1818.7,1264.2 L1828.9,1264.2 L1837.8,1264.2 L1846.8,1264.2 L1856.2,1264.2 L1865.9,1264.2 L1874.8,1264.2 L1883.8,1264.2 L1893.2,1264.2 L1901.6,1264.2 L1911.3,1264.2 L1920.0,1264.2 L1929.2,1264.2 L1938.6,1264.2 L1947.6,1264.2 L1956.5,1264.2 L1966.7,1251.9 L1975.7,1264.2 L1985.3,1264.2 L1994.0,1264.2 L2003.2,1264.2 L2011.9,1264.2 L2021.1,1264.2 L2030.5,1264.2 L2039.5,1264.2 L2048.4,1264.2 L2057.8,1264.2 L2067.0,1264.2 L2075.7,1264.2 L2084.9,1264.2 L2094.3,1264.2 L2103.8,1264.2 L2113.0,1264.2 L2121.6,1264.2 L2130.8,1264.2 L2140.3,1264.2 L2149.2,1264.2 L2158.1,1264.2 L2167.6,1264.2 L2176.8,1264.2 L2186.2,1264.2 L2195.2,1264.2 L2204.1,1264.2 L2213.5,1264.2 L2222.7,1264.2 L2232.2,1264.2 L2241.1,1264.2 L2250.0,1264.2 L2259.5,1264.2 L2268.7,1264.2 L2278.1,1264.2 L2286.5,1264.2 L2296.0,1264.2 L2304.9,1264.2 L2313.8,1264.2 L2323.3,1264.2 L2333.0,1264.2" fill="none" stroke="#E24D42" stroke-width="4" stroke-linejoin="round" stroke-linecap="butt"/><path d="M1783.0,1177.4 L1790.6,954.8 L1800.8,1215.7 L1809.7,1190.2 L1818.7,1190.2 L1828.9,1202.9 L1837.8,1177.4 L1846.8,1227.9 L1856.2,1202.9 L1865.9,1202.9 L1874.8,1103.4 L1883.8,1190.2 L1893.2,1202.9 L1901.6,1202.9 L1911.3,1215.2 L1920.0,1190.2 L1929.2,1202.9 L1938.6,1240.7 L1947.6,1164.6 L1956.5,1202.9 L1966.7,1190.2 L1975.7,1152.4 L1985.3,1177.4 L1994.0,1190.2 L2003.2,1177.4 L2011.9,1202.9 L2021.1,1164.6 L2030.5,1202.9 L2039.5,1114.9 L2048.4,1190.2 L2057.8,1202.9 L2067.0,1190.2 L2075.7,1190.2 L2084.9,1177.4 L2094.3,1078.4 L2103.8,1091.9 L2113.0,1228.5 L2121.6,1202.9 L2130.8,1152.4 L2140.3,1164.6 L2149.2,1190.2 L2158.1,1215.7 L2167.6,1127.6 L2176.8,1228.5 L2186.2,1177.4 L2195.2,1152.4 L2204.1,1202.9 L2213.5,1190.2 L2222.7,1103.4 L2232.2,1103.4 L2241.1,1190.2 L2250.0,1114.9 L2259.5,1240.7 L2268.7,1152.4 L2278.1,1202.9 L2286.5,1202.9 L2296.0,1164.6 L2304.9,1164.6 L2313.8,1127.6 L2323.3,1190.2 L2333.0,1190.2 L2333.0,1264.2 L1783.0,1264.2 Z" fill="#1F78C1" fill-opacity="0.1" stroke="none"/><path d="M1783.0,1177.4 L1790.6,954.8 L1800.8,1215.7 L1809.7,1190.2 L1818.7,1190.2 L1828.9,1202.9 L1837.8,1177.4 L1846.8,1227.9 L1856.2,1202.9 L1865.9,1202.9 L1874.8,1103.4 L1883.8,1190.2 L1893.2,1202.9 L1901.6,1202.9 L1911.3,1215.2 L1920.0,1190.2 L1929.2,1202.9 L1938.6,1240.7 L1947.6,1164.6 L1956.5,1202.9 L1966.7,1190.2 L1975.7,1152.4 L1985.3,1177.4 L1994.0,1190.2 L2003.2,1177.4 L2011.9,1202.9 L2021.1,1164.6 L2030.5,1202.9 L2039.5,1114.9 L2048.4,1190.2 L2057.8,1202.9 L2067.0,1190.2 L2075.7,1190.2 L2084.9,1177.4 L2094.3,1078.4 L2103.8,1091.9 L2113.0,1228.5 L2121.6,1202.9 L2130.8,1152.4 L2140.3,1164.6 L2149.2,1190.2 L2158.1,1215.7 L2167.6,1127.6 L2176.8,1228.5 L2186.2,1177.4 L2195.2,1152.4 L2204.1,1202.9 L2213.5,1190.2 L2222.7,1103.4 L2232.2,1103.4 L2241.1,1190.2 L2250.0,1114.9 L2259.5,1240.7 L2268.7,1152.4 L2278.1,1202.9 L2286.5,1202.9 L2296.0,1164.6 L2304.9,1164.6 L2313.8,1127.6 L2323.3,1190.2 L2333.0,1190.2" fill="none" stroke="#1F78C1" stroke-width="4" stroke-linejoin="round" stroke-linecap="butt"/><path d="M1783.0,1264.2 L1790.6,1264.2 L1800.8,1264.2 L1809.7,1264.2 L1818.7,1264.2 L1828.9,1264.2 L1837.8,1264.2 L1846.8,1251.9 L1856.2,1264.2 L1865.9,1264.2 L1874.8,1264.2 L1883.8,1264.2 L1893.2,1264.2 L1901.6,1264.2 L1911.3,1251.9 L1920.0,1264.2 L1929.2,1264.2 L1938.6,1264.2 L1947.6,1251.9 L1956.5,1264.2 L1966.7,1264.2 L1975.7,1264.2 L1985.3,1264.2 L1994.0,1264.2 L2003.2,1264.2 L2011.9,1264.2 L2021.1,1264.2 L2030.5,1264.2 L2039.5,1264.2 L2048.4,1264.2 L2057.8,1239.9 L2067.0,1264.2 L2075.7,1264.2 L2084.9,1264.2 L2094.3,1251.9 L2103.8,1264.2 L2113.0,1264.2 L2121.6,1264.2 L2130.8,1264.2 L2140.3,1264.2 L2149.2,1251.9 L2158.1,1264.2 L2167.6,1264.2 L2176.8,1264.2 L2186.2,1264.2 L2195.2,1264.2 L2204.1,1264.2 L2213.5,1264.2 L2222.7,1264.2 L2232.2,1264.2 L2241.1,1264.2 L2250.0,1264.2 L2259.5,1264.2 L2268.7,1264.2 L2278.1,1264.2 L2286.5,1264.2 L2296.0,1264.2 L2304.9,1264.2 L2313.8,1264.2 L2323.3,1264.2 L2333.0,1264.2 L2333.0,1264.2 L1783.0,1264.2 Z" fill="#705DA0" fill-opacity="0.1" stroke="none"/><path d="M1783.0,1264.2 L1790.6,1264.2 L1800.8,1264.2 L1809.7,1264.2 L1818.7,1264.2 L1828.9,1264.2 L1837.8,1264.2 L1846.8,1251.9 L1856.2,1264.2 L1865.9,1264.2 L1874.8,1264.2 L1883.8,1264.2 L1893.2,1264.2 L1901.6,1264.2 L1911.3,1251.9 L1920.0,1264.2 L1929.2,1264.2 L1938.6,1264.2 L1947.6,1251.9 L1956.5,1264.2 L1966.7,1264.2 L1975.7,1264.2 L1985.3,1264.2 L1994.0,1264.2 L2003.2,1264.2 L2011.9,1264.2 L2021.1,1264.2 L2030.5,1264.2 L2039.5,1264.2 L2048.4,1264.2 L2057.8,1239.9 L2067.0,1264.2 L2075.7,1264.2 L2084.9,1264.2 L2094.3,1251.9 L2103.8,1264.2 L2113.0,1264.2 L2121.6,1264.2 L2130.8,1264.2 L2140.3,1264.2 L2149.2,1251.9 L2158.1,1264.2 L2167.6,1264.2 L2176.8,1264.2 L2186.2,1264.2 L2195.2,1264.2 L2204.1,1264.2 L2213.5,1264.2 L2222.7,1264.2 L2232.2,1264.2 L2241.1,1264.2 L2250.0,1264.2 L2259.5,1264.2 L2268.7,1264.2 L2278.1,1264.2 L2286.5,1264.2 L2296.0,1264.2 L2304.9,1264.2 L2313.8,1264.2 L2323.3,1264.2 L2333.0,1264.2" fill="none" stroke="#705DA0" stroke-width="4" stroke-linejoin="round" stroke-linecap="butt"/><line x1="1783" y1="1263.7" x2="2333" y2="1263.7" stroke="#508642" stroke-width="4"/><text x="1771.6" y="901.4" font-size="24" fill="#c6c9cc" text-anchor="end" stroke="#c6c9cc" stroke-width="0.75">0.8%</text><text x="1771.6" y="993.9499999999999" font-size="24" fill="#c6c9cc" text-anchor="end" stroke="#c6c9cc" stroke-width="0.75">0.6%</text><text x="1771.6" y="1086.5" font-size="24" fill="#c6c9cc" text-anchor="end" stroke="#c6c9cc" stroke-width="0.75">0.4%</text><text x="1771.6" y="1179.0500000000002" font-size="24" fill="#c6c9cc" text-anchor="end" stroke="#c6c9cc" stroke-width="0.75">0.2%</text><text x="1771.6" y="1271.6000000000001" font-size="24" fill="#c6c9cc" text-anchor="end" stroke="#c6c9cc" stroke-width="0.75">0%</text><text x="1790.5" y="1301.3" font-size="24" fill="#c6c9cc" text-anchor="middle" textLength="58" lengthAdjust="spacingAndGlyphs" stroke="#c6c9cc" stroke-width="0.75">20:40</text><text x="1974" y="1301.3" font-size="24" fill="#c6c9cc" text-anchor="middle" textLength="58" lengthAdjust="spacingAndGlyphs" stroke="#c6c9cc" stroke-width="0.75">20:45</text><text x="2156" y="1301.3" font-size="24" fill="#c6c9cc" text-anchor="middle" textLength="58" lengthAdjust="spacingAndGlyphs" stroke="#c6c9cc" stroke-width="0.75">20:50</text><rect x="2373.5" y="899" width="25" height="7" rx="2.5" fill="#7EB26D"/><text x="2412" y="907" font-size="24" fill="#e6e6e6" text-anchor="start" stroke="#e6e6e6" stroke-width="0.5">dm-0</text><rect x="2373" y="923" width="118" height="48" fill="#232323"/><rect x="2373.5" y="947" width="25" height="7" rx="2.5" fill="#EAB839"/><text x="2412" y="955" font-size="24" fill="#e6e6e6" text-anchor="start" stroke="#e6e6e6" stroke-width="0.5">dm-1</text><rect x="2373.5" y="995" width="25" height="7" rx="2.5" fill="#6ED0E0"/><text x="2412" y="1003" font-size="24" fill="#e6e6e6" text-anchor="start" stroke="#e6e6e6" stroke-width="0.5">dm-2</text><rect x="2373" y="1019" width="118" height="48" fill="#232323"/><rect x="2373.5" y="1043" width="25" height="7" rx="2.5" fill="#EF843C"/><text x="2412" y="1051" font-size="24" fill="#e6e6e6" text-anchor="start" stroke="#e6e6e6" stroke-width="0.5">dm-3</text><rect x="2373.5" y="1091" width="25" height="7" rx="2.5" fill="#E24D42"/><text x="2412" y="1099" font-size="24" fill="#e6e6e6" text-anchor="start" stroke="#e6e6e6" stroke-width="0.5">dm-4</text><rect x="2373" y="1115" width="118" height="48" fill="#232323"/><rect x="2373.5" y="1139" width="25" height="7" rx="2.5" fill="#1F78C1"/><text x="2412" y="1147" font-size="24" fill="#e6e6e6" text-anchor="start" stroke="#e6e6e6" stroke-width="0.5">sda</text><rect x="2373.5" y="1187" width="25" height="7" rx="2.5" fill="#BA43A9"/><text x="2412" y="1195" font-size="24" fill="#e6e6e6" text-anchor="start" stroke="#e6e6e6" stroke-width="0.5">sdb</text><rect x="2373" y="1211" width="118" height="48" fill="#232323"/><rect x="2373.5" y="1235" width="25" height="7" rx="2.5" fill="#705DA0"/><text x="2412" y="1243" font-size="24" fill="#e6e6e6" text-anchor="start" stroke="#e6e6e6" stroke-width="0.5">sdd</text><rect x="2373.5" y="1283" width="25" height="7" rx="2.5" fill="#508642"/><text x="2412" y="1291" font-size="24" fill="#e6e6e6" text-anchor="start" stroke="#e6e6e6" stroke-width="0.5">sr0</text></svg>
</body></html>
